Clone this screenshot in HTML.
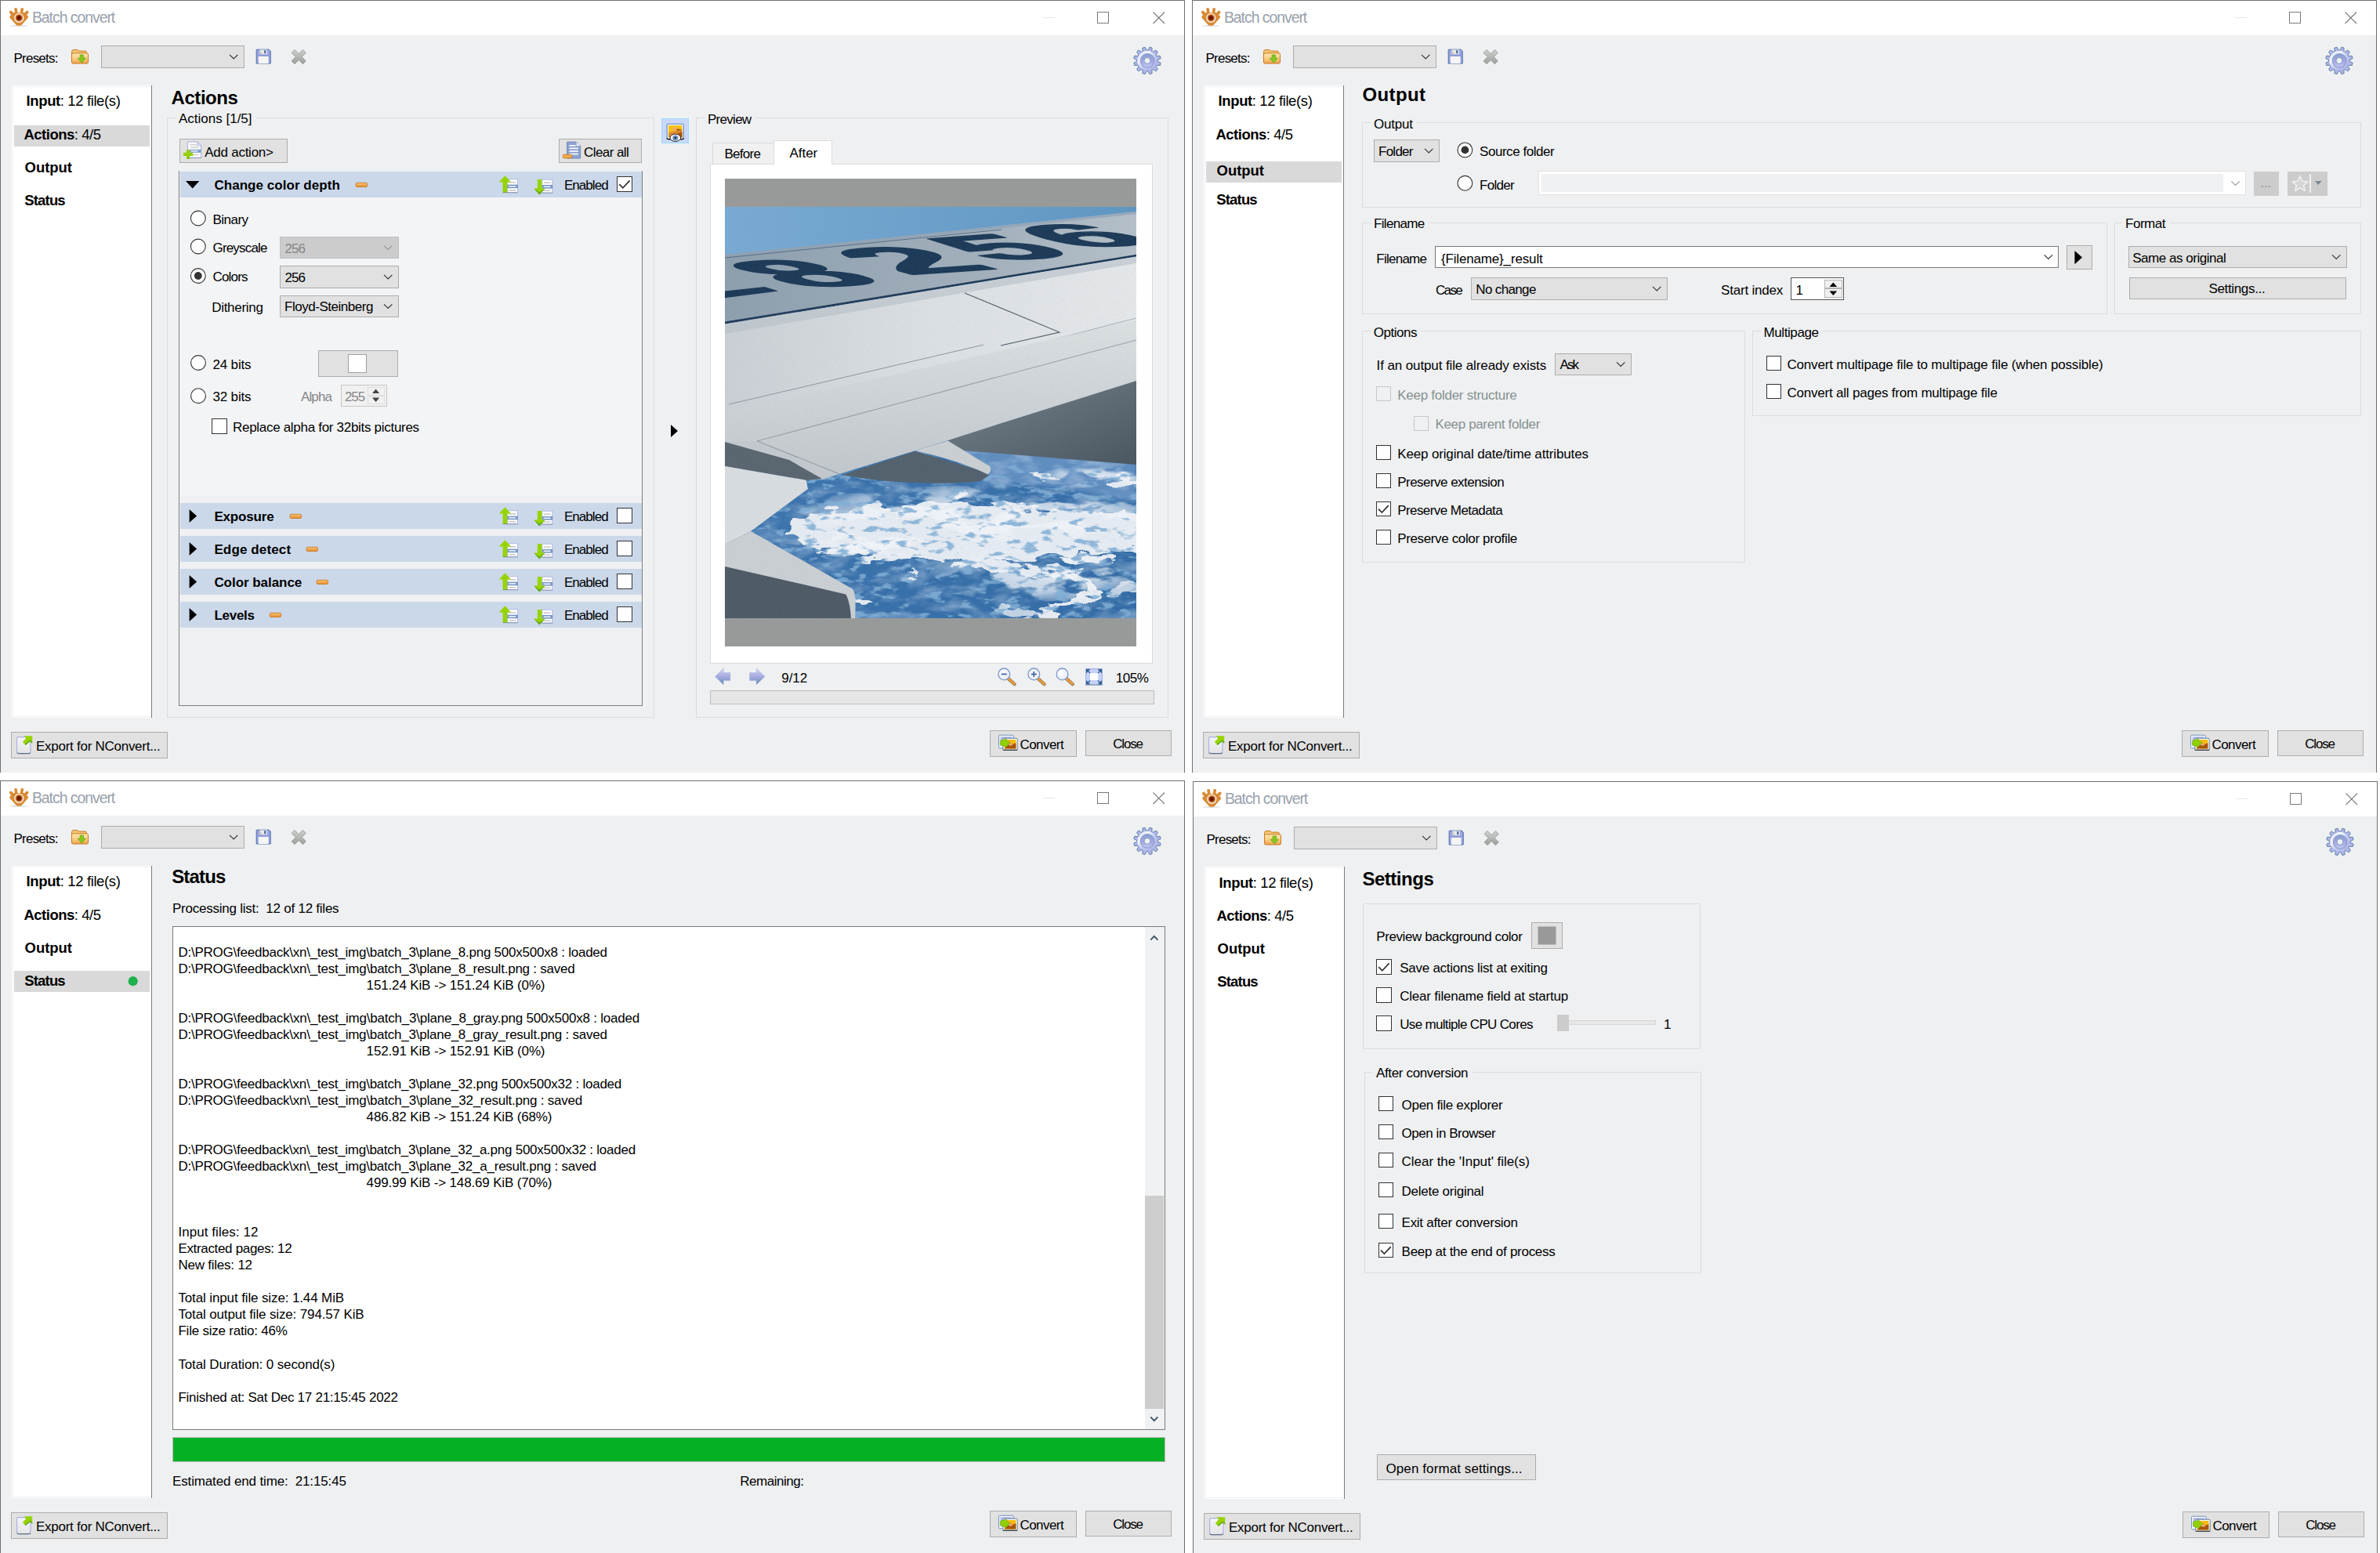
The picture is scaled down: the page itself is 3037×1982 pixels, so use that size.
<!DOCTYPE html>
<html><head><meta charset="utf-8"><title>Batch convert</title><style>html,body{margin:0;padding:0}
body{width:3037px;height:1982px;background:#fff;position:relative;overflow:hidden;font-family:"Liberation Sans",sans-serif;}
.win{position:absolute;overflow:hidden}
.win>div,.win>span,.win>svg{position:absolute}
.win>span{white-space:pre;line-height:1;color:#000}
svg{overflow:visible}</style></head><body>
<div class="win" style="left:0px;top:0px;width:1512px;height:986px"><div style="left:0px;top:0px;width:1512px;height:986px;background:#eff0f2;"></div>
<div style="left:0px;top:0px;width:1512px;height:45px;background:#fff;"></div>
<div style="left:0px;top:0px;width:1512px;height:1px;background:#6f6f6f;"></div>
<div style="left:0px;top:0px;width:1px;height:986px;background:#6f6f6f;"></div>
<div style="left:1511px;top:0px;width:1px;height:986px;background:#6f6f6f;"></div>
<svg style="left:12px;top:10px;" width="26" height="25" viewBox="0 0 26 25"><ellipse cx="12" cy="22.9" rx="11.5" ry="1.3" fill="#000" opacity=".10"/>
<g fill="#d88b36"><rect x="6.6" y="0" width="3.7" height="8" rx="1.7" transform="rotate(-9 8.4 4)"/>
<rect x="14" y="0" width="3.7" height="8" rx="1.7" transform="rotate(9 15.8 4)"/>
<rect x="1.2" y="3.2" width="3.9" height="7.5" rx="1.8" transform="rotate(-42 3.1 7)"/>
<rect x="19.3" y="3.2" width="3.9" height="7.5" rx="1.8" transform="rotate(42 21.3 7)"/>
<path d="M.3 12.6 Q-.2 11.6 .8 10.6 L5 6 H19.4 L23.6 10.6 Q24.6 11.6 24 12.6 L16 21.6 Q15 22.8 13.6 22.8 H10.8 Q9.4 22.8 8.4 21.6 Z"/></g>
<circle cx="12.3" cy="12.8" r="5.5" fill="none" stroke="#f4f3ee" stroke-width="1.3"/>
<circle cx="12.3" cy="12.8" r="3.5" fill="#8a2a05"/><circle cx="12.3" cy="12.7" r="1.9" fill="#611400"/></svg>
<span style="left:40.90px;top:13.25px;font-size:19.5px;color:#98a1ac;letter-spacing:-1.070px;">Batch convert</span>
<div style="left:1331px;top:22px;width:15px;height:1px;background:#e6e6e6;"></div>
<div style="left:1400px;top:15px;width:15px;height:15px;border:1px solid #7a7a7a;box-sizing:border-box;"></div>
<svg style="left:1471px;top:15px;" width="17" height="17" viewBox="0 0 17 17"><path d="M.5 .5 L15 15 M15 .5 L.5 15" stroke="#7a7a7a" stroke-width="1.1" fill="none"/></svg>
<span style="left:17.50px;top:66.00px;font-size:17px;letter-spacing:-0.770px;">Presets:</span>
<svg style="left:90px;top:62px;" width="24" height="21" viewBox="0 0 24 21"><g transform="translate(0.50 0.50)"><defs><linearGradient id="fg" x1="0" y1="0" x2="0" y2="1"><stop offset="0" stop-color="#fde6ae"/><stop offset=".5" stop-color="#f9cf85"/><stop offset="1" stop-color="#efa24a"/></linearGradient></defs>
<path d="M1 4 Q1 1 3.5 1 H7.5 Q9 1 10 2.6 H18.5 Q19.8 2.6 19.8 4 V8 H1 Z" fill="#f6c676" stroke="#c9781f" stroke-width="1"/>
<rect x="1" y="5.3" width="21" height="13.2" rx="1.8" fill="url(#fg)" stroke="#c9781f" stroke-width="1"/>
<path d="M11.6 7.5 H16 V11.8 H19 L13.8 17.6 L8.6 11.8 H11.6 Z" fill="#84c81c" stroke="#5a9c14" stroke-width=".6"/></g></svg>
<div style="left:129px;top:58px;width:183px;height:29px;background:#e1e1e1;border:1px solid #adadad;box-sizing:border-box;"></div>
<svg style="left:292px;top:68px;" width="13" height="9" viewBox="0 0 13 9"><g transform="translate(0.40 0.80)"><path d="M0.6 1 L5.8 6.2 L11 1" fill="none" stroke="#333" stroke-width="1.15"/></g></svg>
<svg style="left:326px;top:62px;" width="21" height="21" viewBox="0 0 21 21"><g transform="translate(0.60 0.60)"><path d="M1.2 .6 H16.6 L18.6 2.6 V18.4 H.6 V1.2 Q.6 .6 1.2 .6Z" fill="#9ea2e3" stroke="#456fa6" stroke-width="1"/>
<rect x="4.6" y=".8" width="9.8" height="5.8" fill="#e9e9e9"/><rect x="10.6" y="1.6" width="2.2" height="4" fill="#3e6698"/>
<path d="M4.6 .8 L8.5 6.6 H4.6Z" fill="#c9c9c9"/>
<rect x="3.2" y="9.4" width="12.8" height="9" fill="#f5f5f5"/><rect x="1" y="7.6" width="17" height="1.2" fill="#7f9ad0" opacity=".8"/></g></svg>
<svg style="left:371px;top:63px;" width="21" height="21" viewBox="0 0 21 21"><g transform="translate(0.60 0.00)"><defs><linearGradient id="gx" x1="0" y1="0" x2="0" y2="1"><stop offset="0" stop-color="#cfd1cf"/><stop offset="1" stop-color="#9b9e9b"/></linearGradient></defs>
<path d="M4.4 .5 L9.6 5.7 L14.8 .5 L18.7 4.4 L13.5 9.6 L18.7 14.8 L14.8 18.7 L9.6 13.5 L4.4 18.7 L.5 14.8 L5.7 9.6 L.5 4.4 Z" fill="url(#gx)" stroke="#8d908d" stroke-width=".8"/></g></svg>
<svg style="left:1446px;top:59px;" width="37" height="37" viewBox="0 0 37 37"><g transform="translate(0.00 0.40)"><defs><linearGradient id="gg" x1="0" y1="0" x2="1" y2="1"><stop offset="0" stop-color="#c9d2f6"/><stop offset=".3" stop-color="#f4f6fd"/><stop offset=".55" stop-color="#bfc8f2"/><stop offset="1" stop-color="#a9ace2"/></linearGradient>
<linearGradient id="gg2" x1="0" y1="0" x2="0" y2="1"><stop offset="0" stop-color="#869fd0"/><stop offset=".6" stop-color="#aaa9e2"/><stop offset="1" stop-color="#c3ccf4"/></linearGradient></defs>
<path d="M18.76 4.82 L20.90 0.84 L24.07 1.69 L23.93 6.21 L25.25 6.97 L29.09 4.59 L31.41 6.91 L29.03 10.75 L29.79 12.07 L34.31 11.93 L35.16 15.10 L31.18 17.24 L31.18 18.76 L35.16 20.90 L34.31 24.07 L29.79 23.93 L29.03 25.25 L31.41 29.09 L29.09 31.41 L25.25 29.03 L23.93 29.79 L24.07 34.31 L20.90 35.16 L18.76 31.18 L17.24 31.18 L15.10 35.16 L11.93 34.31 L12.07 29.79 L10.75 29.03 L6.91 31.41 L4.59 29.09 L6.97 25.25 L6.21 23.93 L1.69 24.07 L0.84 20.90 L4.82 18.76 L4.82 17.24 L0.84 15.10 L1.69 11.93 L6.21 12.07 L6.97 10.75 L4.59 6.91 L6.91 4.59 L10.75 6.97 L12.07 6.21 L11.93 1.69 L15.10 0.84 L17.24 4.82Z" fill="#b1b4e6" stroke="#5c83aa" stroke-width="1" stroke-linejoin="round"/>
<circle cx="18" cy="18" r="12.6" fill="url(#gg)"/>
<circle cx="18" cy="18" r="8.8" fill="url(#gg2)" stroke="#6f8fbd" stroke-width=".8"/>
<circle cx="18" cy="18" r="3.9" fill="#eef0f2" stroke="#6f8fbd" stroke-width=".8"/></g></svg>
<div style="left:15px;top:109px;width:179px;height:807px;background:#fff;"></div>
<div style="left:16px;top:110px;width:177px;height:1px;background:#eff0f2;"></div>
<div style="left:16px;top:110px;width:1px;height:805px;background:#eff0f2;"></div>
<div style="left:16px;top:914px;width:177px;height:1px;background:#eff0f2;"></div>
<div style="left:193px;top:109px;width:1px;height:807px;background:#7b7d80;"></div>
<span style="left:33.60px;top:120.25px;font-size:18.5px;font-weight:bold;letter-spacing:-0.388px">Input<span style="position:static;font-weight:normal">: 12 file(s)</span></span>
<div style="left:18px;top:160px;width:173px;height:27px;background:#d9d9d9;"></div>
<span style="left:30.40px;top:163.25px;font-size:18.5px;font-weight:bold;letter-spacing:-0.483px">Actions<span style="position:static;font-weight:normal">: 4/5</span></span>
<span style="left:31.60px;top:205.25px;font-size:18.5px;font-weight:bold;letter-spacing:-0.056px">Output</span>
<span style="left:31.30px;top:247.25px;font-size:18.5px;font-weight:bold;letter-spacing:-0.842px">Status</span>
<span style="left:218.50px;top:112.50px;font-size:24px;font-weight:bold;letter-spacing:-0.430px;">Actions</span>
<div style="left:14px;top:934px;width:200px;height:34px;background:#e1e1e1;border:1px solid #adadad;box-sizing:border-box;"></div>
<svg style="left:21px;top:939px;" width="22" height="25" viewBox="0 0 22 25"><defs><linearGradient id="ep" x1="0" y1="0" x2="0" y2="1"><stop offset="0" stop-color="#f4f4f6"/><stop offset="1" stop-color="#e4e4e6"/></linearGradient></defs>
<rect x=".6" y="1.6" width="17.4" height="21" rx="1.6" fill="url(#ep)" stroke="#a9afe4" stroke-width="1.1"/>
<path d="M1.2 21.2 Q1.2 22.6 2.6 22.6 H16 Q17.6 22.6 17.6 21.2" fill="none" stroke="#5d7186" stroke-width="1.1"/>
<path d="M10 .2 H20.2 V9.4 L17 7.6 L11.6 12 L7.8 7.8 L12.2 3.6Z" fill="#97d200"/>
<path d="M20.2 9.4 L17 7.6 L11.6 12 L10.6 10.8 L17 6 L20.2 7.6Z" fill="#4f9a2a" opacity=".8"/></svg>
<span style="left:46.00px;top:944.00px;font-size:17px;letter-spacing:-0.266px;">Export for NConvert...</span>
<div style="left:1263px;top:932px;width:111px;height:34px;background:#e1e1e1;border:1px solid #adadad;box-sizing:border-box;"></div>
<svg style="left:1274px;top:937px;" width="26" height="22" viewBox="0 0 26 22"><g transform="translate(0.00 0.60)"><rect x=".6" y=".6" width="18.6" height="16.6" rx="1.2" fill="#fff" stroke="#6a8bb8" stroke-width="1"/>
<rect x="2.4" y="2.4" width="15" height="12" fill="#b9bef0"/>
<rect x="5.8" y="4.6" width="18.4" height="15.2" rx="1.2" fill="#fff" stroke="#5f7f9f" stroke-width="1"/>
<rect x="7.6" y="6.4" width="14.8" height="11.6" fill="#f5ba0c"/>
<path d="M7.6 18 L15 9.5 L18 12.2 L22.4 10.6 V18Z" fill="#a8540e"/><path d="M12 13 L15 9.5 L18 12.2 L20 11.5 L16 14.5Z" fill="#eaa968"/>
<path d="M5.8 19.6 H24.2" stroke="#333" stroke-width="1.2"/>
<path d="M2.4 9.4 Q2.4 6.4 5.4 6.4 H8.8 V4.4 L14.4 10.6 L8.8 16.8 V14.6 H6 Q2.4 14.6 2.4 11.2Z" fill="#8fd000" stroke="#5a9c14" stroke-width=".5"/></g></svg>
<span style="left:1301.50px;top:942.00px;font-size:17px;letter-spacing:-0.567px;">Convert</span>
<div style="left:1385px;top:932px;width:110px;height:33px;background:#e1e1e1;border:1px solid #adadad;box-sizing:border-box;"></div>
<span style="left:1420.20px;top:941.00px;font-size:17px;letter-spacing:-1.180px;">Close</span>
<div style="left:213px;top:150px;width:622px;height:766px;border:1px solid #dcdcdc;box-sizing:border-box;"></div>
<div style="left:224px;top:148px;width:102.5px;height:5px;background:#eff0f2;"></div>
<span style="left:228.00px;top:143.00px;font-size:17px;letter-spacing:0.000px;">Actions [1/5]</span>
<div style="left:229px;top:177px;width:138px;height:31px;background:#e1e1e1;border:1px solid #adadad;box-sizing:border-box;"></div>
<svg style="left:234px;top:180px;" width="25" height="25" viewBox="0 0 25 25"><g transform="translate(0.00 0.40)"><path d="M5.6 .6 H17.6 L22.6 5.6 V21 H5.6Z" fill="#fff" stroke="#a3a9e2" stroke-width="1"/>
<path d="M17.6 .6 V5.6 H22.6Z" fill="#dfe3f7" stroke="#a3a9e2" stroke-width=".7"/>
<rect x="8.5" y="3.6" width="8" height="1.6" fill="#cfd2d2"/><rect x="8.5" y="7" width="11" height="1.6" fill="#cfd2d2"/>
<rect x="6" y="10.4" width="16.4" height="4" fill="#7f9bcb"/><rect x="9.5" y="11.7" width="9" height="1.3" fill="#fff"/>
<rect x="8.5" y="16.4" width="11" height="1.6" fill="#cfd2d2"/>
<path d="M4 10.6 H8.2 V14.4 H12.2 V18.6 H8.2 V22.6 H4 V18.6 H0 V14.4 H4Z" fill="#97d000"/>
<rect x="5.6" y="20.6" width="17" height="1" fill="#6b7f96" opacity=".6"/></g></svg>
<span style="left:261.20px;top:186.00px;font-size:17px;letter-spacing:-0.247px;">Add action&gt;</span>
<div style="left:713px;top:177px;width:106px;height:31px;background:#e1e1e1;border:1px solid #adadad;box-sizing:border-box;"></div>
<svg style="left:718px;top:180px;" width="25" height="24" viewBox="0 0 25 24"><g transform="translate(0.00 0.60)"><path d="M5.6 .6 H17.6 L22.6 5.6 V21.4 H5.6Z" fill="#8da2cf" stroke="#6f86b8" stroke-width="1"/>
<path d="M17.6 .6 V5.6 H22.6Z" fill="#e8ecf8"/>
<rect x="8.5" y="4.4" width="8" height="1.6" fill="#fff"/><rect x="8.5" y="8" width="11.4" height="1.6" fill="#fff"/>
<rect x="8.5" y="11.6" width="11.4" height="1.6" fill="#fff"/><rect x="8.5" y="15.2" width="11.4" height="1.6" fill="#fff"/>
<rect x=".5" y="16.6" width="11" height="4.6" rx="1.2" fill="#f3a94a" stroke="#c97a22" stroke-width=".9"/></g></svg>
<span style="left:745.00px;top:186.00px;font-size:17px;letter-spacing:-0.561px;">Clear all</span>
<div style="left:228px;top:218px;width:592px;height:683px;background:#eff0f2;"></div>
<div style="left:228px;top:218px;width:1px;height:683px;background:#7b7d80;"></div>
<div style="left:819px;top:218px;width:1px;height:683px;background:#7b7d80;"></div>
<div style="left:228px;top:900px;width:592px;height:1px;background:#7b7d80;"></div>
<div style="left:229px;top:219px;width:590px;height:414px;background:#f3f4f6;"></div>
<div style="left:230px;top:219px;width:589px;height:33px;background:#cbd8ea;"></div>
<svg style="left:237px;top:231px;" width="19" height="11" viewBox="0 0 19 11"><path d="M0 0 H17.4 L8.7 9.6Z" fill="#000"/></svg>
<span style="left:273.40px;top:228.00px;font-size:17px;font-weight:bold;letter-spacing:0.045px;">Change color depth</span>
<svg style="left:453px;top:232px;" width="17" height="8" viewBox="0 0 17 8"><g transform="translate(0.60 0.80)"><defs><linearGradient id="om" x1="0" y1="0" x2="0" y2="1"><stop offset="0" stop-color="#f9c67a"/><stop offset="1" stop-color="#e38d2c"/></linearGradient></defs>
<rect x=".5" y=".5" width="14.4" height="5.2" rx="1.6" fill="url(#om)" stroke="#c97a22" stroke-width=".9"/></g></svg>
<svg style="left:636px;top:224px;" width="26" height="24" viewBox="0 0 26 24"><g transform="translate(0.60 0.00)"><rect x="10.8" y="4.8" width="13" height="17" fill="#fff" stroke="#a9aee6" stroke-width=".8"/>
<rect x="10.8" y="11.6" width="13.4" height="4.6" fill="#7394c6"/>
<rect x="12.6" y="8" width="9" height="1.6" fill="#c9c9c9"/><rect x="12.6" y="13.2" width="9" height="1.4" fill="#fff"/><rect x="12.6" y="18" width="9" height="1.6" fill="#c9c9c9"/>
<path d="M7.8 .2 L15.5 8.6 H10.6 V22 H5 V8.6 H.1 Z" fill="#96d400"/>
<rect x="5" y="21.2" width="19" height="1" fill="#6b7f96" opacity=".7"/></g></svg>
<svg style="left:681px;top:228px;" width="26" height="22" viewBox="0 0 26 22"><g transform="translate(0.00 0.40)"><rect x="10.8" y=".8" width="13" height="17" fill="#fff" stroke="#a9aee6" stroke-width=".8"/>
<rect x="10.8" y="7.6" width="13.4" height="4.6" fill="#7394c6"/>
<rect x="12.6" y="4" width="9" height="1.6" fill="#c9c9c9"/><rect x="12.6" y="9.2" width="9" height="1.4" fill="#fff"/><rect x="12.6" y="14" width="9" height="1.6" fill="#c9c9c9"/>
<path d="M4.8 .6 H10.4 V12 H14.6 L7.4 20 L.2 12 H4.8 Z" fill="#96d400"/>
<path d="M.2 12 L7.4 20 L14.6 12 L7.4 17.2Z" fill="#4f9a2a" opacity=".75"/>
<rect x="10.4" y="17.2" width="14" height="1" fill="#6b7f96" opacity=".7"/></g></svg>
<span style="left:720.00px;top:228.00px;font-size:17px;letter-spacing:-0.965px;">Enabled</span>
<div style="left:787px;top:225px;width:20px;height:20px;background:#fff;border:1px solid #333;box-sizing:border-box;"></div>
<svg style="left:787px;top:225px;" width="21" height="21" viewBox="0 0 21 21"><path d="M3.2 10.2 L7.8 14.8 L16.6 5.4" fill="none" stroke="#333" stroke-width="1.7"/></svg>
<div style="left:230px;top:642px;width:589px;height:33px;background:#cbd8ea;"></div>
<svg style="left:241px;top:649px;" width="12" height="18" viewBox="0 0 12 18"><g transform="translate(0.60 0.90)"><path d="M0 0 L9.5 8.5 L0 17Z" fill="#000"/></g></svg>
<span style="left:273.40px;top:651.00px;font-size:17px;font-weight:bold;letter-spacing:-0.160px;">Exposure</span>
<svg style="left:369px;top:655px;" width="17" height="8" viewBox="0 0 17 8"><g transform="translate(0.60 0.80)"><defs><linearGradient id="om" x1="0" y1="0" x2="0" y2="1"><stop offset="0" stop-color="#f9c67a"/><stop offset="1" stop-color="#e38d2c"/></linearGradient></defs>
<rect x=".5" y=".5" width="14.4" height="5.2" rx="1.6" fill="url(#om)" stroke="#c97a22" stroke-width=".9"/></g></svg>
<svg style="left:636px;top:647px;" width="26" height="24" viewBox="0 0 26 24"><g transform="translate(0.60 0.00)"><rect x="10.8" y="4.8" width="13" height="17" fill="#fff" stroke="#a9aee6" stroke-width=".8"/>
<rect x="10.8" y="11.6" width="13.4" height="4.6" fill="#7394c6"/>
<rect x="12.6" y="8" width="9" height="1.6" fill="#c9c9c9"/><rect x="12.6" y="13.2" width="9" height="1.4" fill="#fff"/><rect x="12.6" y="18" width="9" height="1.6" fill="#c9c9c9"/>
<path d="M7.8 .2 L15.5 8.6 H10.6 V22 H5 V8.6 H.1 Z" fill="#96d400"/>
<rect x="5" y="21.2" width="19" height="1" fill="#6b7f96" opacity=".7"/></g></svg>
<svg style="left:681px;top:651px;" width="26" height="22" viewBox="0 0 26 22"><g transform="translate(0.00 0.40)"><rect x="10.8" y=".8" width="13" height="17" fill="#fff" stroke="#a9aee6" stroke-width=".8"/>
<rect x="10.8" y="7.6" width="13.4" height="4.6" fill="#7394c6"/>
<rect x="12.6" y="4" width="9" height="1.6" fill="#c9c9c9"/><rect x="12.6" y="9.2" width="9" height="1.4" fill="#fff"/><rect x="12.6" y="14" width="9" height="1.6" fill="#c9c9c9"/>
<path d="M4.8 .6 H10.4 V12 H14.6 L7.4 20 L.2 12 H4.8 Z" fill="#96d400"/>
<path d="M.2 12 L7.4 20 L14.6 12 L7.4 17.2Z" fill="#4f9a2a" opacity=".75"/>
<rect x="10.4" y="17.2" width="14" height="1" fill="#6b7f96" opacity=".7"/></g></svg>
<span style="left:720.00px;top:651.00px;font-size:17px;letter-spacing:-0.965px;">Enabled</span>
<div style="left:787px;top:648px;width:20px;height:20px;background:#fff;border:1px solid #333;box-sizing:border-box;"></div>
<div style="left:230px;top:684px;width:589px;height:33px;background:#cbd8ea;"></div>
<svg style="left:241px;top:691px;" width="12" height="18" viewBox="0 0 12 18"><g transform="translate(0.60 0.90)"><path d="M0 0 L9.5 8.5 L0 17Z" fill="#000"/></g></svg>
<span style="left:273.40px;top:693.00px;font-size:17px;font-weight:bold;letter-spacing:0.131px;">Edge detect</span>
<svg style="left:390px;top:697px;" width="17" height="8" viewBox="0 0 17 8"><g transform="translate(0.60 0.80)"><defs><linearGradient id="om" x1="0" y1="0" x2="0" y2="1"><stop offset="0" stop-color="#f9c67a"/><stop offset="1" stop-color="#e38d2c"/></linearGradient></defs>
<rect x=".5" y=".5" width="14.4" height="5.2" rx="1.6" fill="url(#om)" stroke="#c97a22" stroke-width=".9"/></g></svg>
<svg style="left:636px;top:689px;" width="26" height="24" viewBox="0 0 26 24"><g transform="translate(0.60 0.00)"><rect x="10.8" y="4.8" width="13" height="17" fill="#fff" stroke="#a9aee6" stroke-width=".8"/>
<rect x="10.8" y="11.6" width="13.4" height="4.6" fill="#7394c6"/>
<rect x="12.6" y="8" width="9" height="1.6" fill="#c9c9c9"/><rect x="12.6" y="13.2" width="9" height="1.4" fill="#fff"/><rect x="12.6" y="18" width="9" height="1.6" fill="#c9c9c9"/>
<path d="M7.8 .2 L15.5 8.6 H10.6 V22 H5 V8.6 H.1 Z" fill="#96d400"/>
<rect x="5" y="21.2" width="19" height="1" fill="#6b7f96" opacity=".7"/></g></svg>
<svg style="left:681px;top:693px;" width="26" height="22" viewBox="0 0 26 22"><g transform="translate(0.00 0.40)"><rect x="10.8" y=".8" width="13" height="17" fill="#fff" stroke="#a9aee6" stroke-width=".8"/>
<rect x="10.8" y="7.6" width="13.4" height="4.6" fill="#7394c6"/>
<rect x="12.6" y="4" width="9" height="1.6" fill="#c9c9c9"/><rect x="12.6" y="9.2" width="9" height="1.4" fill="#fff"/><rect x="12.6" y="14" width="9" height="1.6" fill="#c9c9c9"/>
<path d="M4.8 .6 H10.4 V12 H14.6 L7.4 20 L.2 12 H4.8 Z" fill="#96d400"/>
<path d="M.2 12 L7.4 20 L14.6 12 L7.4 17.2Z" fill="#4f9a2a" opacity=".75"/>
<rect x="10.4" y="17.2" width="14" height="1" fill="#6b7f96" opacity=".7"/></g></svg>
<span style="left:720.00px;top:693.00px;font-size:17px;letter-spacing:-0.965px;">Enabled</span>
<div style="left:787px;top:690px;width:20px;height:20px;background:#fff;border:1px solid #333;box-sizing:border-box;"></div>
<div style="left:230px;top:726px;width:589px;height:33px;background:#cbd8ea;"></div>
<svg style="left:241px;top:733px;" width="12" height="18" viewBox="0 0 12 18"><g transform="translate(0.60 0.90)"><path d="M0 0 L9.5 8.5 L0 17Z" fill="#000"/></g></svg>
<span style="left:273.40px;top:735.00px;font-size:17px;font-weight:bold;letter-spacing:-0.047px;">Color balance</span>
<svg style="left:403px;top:739px;" width="17" height="8" viewBox="0 0 17 8"><g transform="translate(0.60 0.80)"><defs><linearGradient id="om" x1="0" y1="0" x2="0" y2="1"><stop offset="0" stop-color="#f9c67a"/><stop offset="1" stop-color="#e38d2c"/></linearGradient></defs>
<rect x=".5" y=".5" width="14.4" height="5.2" rx="1.6" fill="url(#om)" stroke="#c97a22" stroke-width=".9"/></g></svg>
<svg style="left:636px;top:731px;" width="26" height="24" viewBox="0 0 26 24"><g transform="translate(0.60 0.00)"><rect x="10.8" y="4.8" width="13" height="17" fill="#fff" stroke="#a9aee6" stroke-width=".8"/>
<rect x="10.8" y="11.6" width="13.4" height="4.6" fill="#7394c6"/>
<rect x="12.6" y="8" width="9" height="1.6" fill="#c9c9c9"/><rect x="12.6" y="13.2" width="9" height="1.4" fill="#fff"/><rect x="12.6" y="18" width="9" height="1.6" fill="#c9c9c9"/>
<path d="M7.8 .2 L15.5 8.6 H10.6 V22 H5 V8.6 H.1 Z" fill="#96d400"/>
<rect x="5" y="21.2" width="19" height="1" fill="#6b7f96" opacity=".7"/></g></svg>
<svg style="left:681px;top:735px;" width="26" height="22" viewBox="0 0 26 22"><g transform="translate(0.00 0.40)"><rect x="10.8" y=".8" width="13" height="17" fill="#fff" stroke="#a9aee6" stroke-width=".8"/>
<rect x="10.8" y="7.6" width="13.4" height="4.6" fill="#7394c6"/>
<rect x="12.6" y="4" width="9" height="1.6" fill="#c9c9c9"/><rect x="12.6" y="9.2" width="9" height="1.4" fill="#fff"/><rect x="12.6" y="14" width="9" height="1.6" fill="#c9c9c9"/>
<path d="M4.8 .6 H10.4 V12 H14.6 L7.4 20 L.2 12 H4.8 Z" fill="#96d400"/>
<path d="M.2 12 L7.4 20 L14.6 12 L7.4 17.2Z" fill="#4f9a2a" opacity=".75"/>
<rect x="10.4" y="17.2" width="14" height="1" fill="#6b7f96" opacity=".7"/></g></svg>
<span style="left:720.00px;top:735.00px;font-size:17px;letter-spacing:-0.965px;">Enabled</span>
<div style="left:787px;top:732px;width:20px;height:20px;background:#fff;border:1px solid #333;box-sizing:border-box;"></div>
<div style="left:230px;top:768px;width:589px;height:33px;background:#cbd8ea;"></div>
<svg style="left:241px;top:775px;" width="12" height="18" viewBox="0 0 12 18"><g transform="translate(0.60 0.90)"><path d="M0 0 L9.5 8.5 L0 17Z" fill="#000"/></g></svg>
<span style="left:273.40px;top:777.00px;font-size:17px;font-weight:bold;letter-spacing:-0.254px;">Levels</span>
<svg style="left:343px;top:781px;" width="17" height="8" viewBox="0 0 17 8"><g transform="translate(0.80 0.80)"><defs><linearGradient id="om" x1="0" y1="0" x2="0" y2="1"><stop offset="0" stop-color="#f9c67a"/><stop offset="1" stop-color="#e38d2c"/></linearGradient></defs>
<rect x=".5" y=".5" width="14.4" height="5.2" rx="1.6" fill="url(#om)" stroke="#c97a22" stroke-width=".9"/></g></svg>
<svg style="left:636px;top:773px;" width="26" height="24" viewBox="0 0 26 24"><g transform="translate(0.60 0.00)"><rect x="10.8" y="4.8" width="13" height="17" fill="#fff" stroke="#a9aee6" stroke-width=".8"/>
<rect x="10.8" y="11.6" width="13.4" height="4.6" fill="#7394c6"/>
<rect x="12.6" y="8" width="9" height="1.6" fill="#c9c9c9"/><rect x="12.6" y="13.2" width="9" height="1.4" fill="#fff"/><rect x="12.6" y="18" width="9" height="1.6" fill="#c9c9c9"/>
<path d="M7.8 .2 L15.5 8.6 H10.6 V22 H5 V8.6 H.1 Z" fill="#96d400"/>
<rect x="5" y="21.2" width="19" height="1" fill="#6b7f96" opacity=".7"/></g></svg>
<svg style="left:681px;top:777px;" width="26" height="22" viewBox="0 0 26 22"><g transform="translate(0.00 0.40)"><rect x="10.8" y=".8" width="13" height="17" fill="#fff" stroke="#a9aee6" stroke-width=".8"/>
<rect x="10.8" y="7.6" width="13.4" height="4.6" fill="#7394c6"/>
<rect x="12.6" y="4" width="9" height="1.6" fill="#c9c9c9"/><rect x="12.6" y="9.2" width="9" height="1.4" fill="#fff"/><rect x="12.6" y="14" width="9" height="1.6" fill="#c9c9c9"/>
<path d="M4.8 .6 H10.4 V12 H14.6 L7.4 20 L.2 12 H4.8 Z" fill="#96d400"/>
<path d="M.2 12 L7.4 20 L14.6 12 L7.4 17.2Z" fill="#4f9a2a" opacity=".75"/>
<rect x="10.4" y="17.2" width="14" height="1" fill="#6b7f96" opacity=".7"/></g></svg>
<span style="left:720.00px;top:777.00px;font-size:17px;letter-spacing:-0.965px;">Enabled</span>
<div style="left:787px;top:774px;width:20px;height:20px;background:#fff;border:1px solid #333;box-sizing:border-box;"></div>
<svg style="left:241px;top:267px;" width="23" height="23" viewBox="0 0 23 23"><g transform="translate(0.80 0.50)"><circle cx="11" cy="11" r="9.4" fill="#fff" stroke="#333" stroke-width="1.1"/></g></svg>
<span style="left:271.50px;top:272.00px;font-size:17px;letter-spacing:-0.522px;">Binary</span>
<svg style="left:241px;top:303px;" width="23" height="23" viewBox="0 0 23 23"><g transform="translate(0.80 0.50)"><circle cx="11" cy="11" r="9.4" fill="#fff" stroke="#333" stroke-width="1.1"/></g></svg>
<span style="left:271.50px;top:308.00px;font-size:17px;letter-spacing:-0.825px;">Greyscale</span>
<div style="left:357px;top:302px;width:152px;height:28px;background:#cccccc;border:1px solid #bfbfbf;box-sizing:border-box;"></div>
<svg style="left:489px;top:312px;" width="13" height="9" viewBox="0 0 13 9"><g transform="translate(0.40 0.30)"><path d="M0.6 1 L5.8 6.2 L11 1" fill="none" stroke="#9a9a9a" stroke-width="1.15"/></g></svg>
<span style="left:363.60px;top:309.00px;font-size:17px;color:#858585;letter-spacing:-0.995px;">256</span>
<svg style="left:241px;top:341px;" width="23" height="23" viewBox="0 0 23 23"><g transform="translate(0.80 0.00)"><circle cx="11" cy="11" r="9.4" fill="#fff" stroke="#333" stroke-width="1.1"/><circle cx="11" cy="11" r="4.9" fill="#333"/></g></svg>
<span style="left:271.50px;top:345.00px;font-size:17px;letter-spacing:-0.826px;">Colors</span>
<div style="left:357px;top:339px;width:152px;height:29px;background:#e1e1e1;border:1px solid #adadad;box-sizing:border-box;"></div>
<svg style="left:489px;top:349px;" width="13" height="9" viewBox="0 0 13 9"><g transform="translate(0.40 0.80)"><path d="M0.6 1 L5.8 6.2 L11 1" fill="none" stroke="#333" stroke-width="1.15"/></g></svg>
<span style="left:363.60px;top:346.00px;font-size:17px;letter-spacing:-0.995px;">256</span>
<span style="left:270.20px;top:384.00px;font-size:17px;letter-spacing:-0.288px;">Dithering</span>
<div style="left:357px;top:377px;width:152px;height:28px;background:#e1e1e1;border:1px solid #adadad;box-sizing:border-box;"></div>
<svg style="left:489px;top:387px;" width="13" height="9" viewBox="0 0 13 9"><g transform="translate(0.40 0.30)"><path d="M0.6 1 L5.8 6.2 L11 1" fill="none" stroke="#333" stroke-width="1.15"/></g></svg>
<span style="left:363.00px;top:383.00px;font-size:17px;letter-spacing:-0.466px;">Floyd-Steinberg</span>
<svg style="left:242px;top:452px;" width="23" height="23" viewBox="0 0 23 23"><circle cx="11" cy="11" r="9.4" fill="#fff" stroke="#333" stroke-width="1.1"/></svg>
<span style="left:271.50px;top:457.00px;font-size:17px;letter-spacing:-0.175px;">24 bits</span>
<div style="left:406px;top:447px;width:102px;height:34px;background:#e1e1e1;border:1px solid #adadad;box-sizing:border-box;"></div>
<div style="left:444px;top:452px;width:24px;height:24px;background:#fff;border:1px solid #a0a0a0;box-sizing:border-box;"></div>
<svg style="left:242px;top:494px;" width="23" height="23" viewBox="0 0 23 23"><g transform="translate(0.00 0.20)"><circle cx="11" cy="11" r="9.4" fill="#fff" stroke="#333" stroke-width="1.1"/></g></svg>
<span style="left:271.50px;top:498.00px;font-size:17px;letter-spacing:-0.175px;">32 bits</span>
<span style="left:384.00px;top:498.00px;font-size:17px;color:#858585;letter-spacing:-0.880px;">Alpha</span>
<div style="left:435px;top:491px;width:59px;height:28px;background:#f1f1f1;border:1px solid #c6c6c6;box-sizing:border-box;"></div>
<span style="left:440.00px;top:498.00px;font-size:17px;color:#858585;letter-spacing:-1.095px;">255</span>
<div style="left:469px;top:494px;width:22px;height:11px;border:1px solid #dedede;box-sizing:border-box;"></div>
<div style="left:469px;top:505px;width:22px;height:11px;border:1px solid #dedede;box-sizing:border-box;"></div>
<svg style="left:475px;top:496px;" width="11" height="8" viewBox="0 0 11 8"><path d="M0 6 L4.6 .6 L9.2 6Z" fill="#444"/></svg>
<svg style="left:475px;top:507px;" width="11" height="8" viewBox="0 0 11 8"><path d="M0 .6 L4.6 6 L9.2 .6Z" fill="#444"/></svg>
<div style="left:270px;top:534px;width:20px;height:20px;background:#fff;border:1px solid #333;box-sizing:border-box;"></div>
<span style="left:297.00px;top:537.00px;font-size:17px;letter-spacing:-0.298px;">Replace alpha for 32bits pictures</span>
<div style="left:844px;top:151px;width:35px;height:32px;background:#cad8fb;border:1px solid #9bdaff;box-sizing:border-box;"></div>
<svg style="left:850px;top:157px;" width="24" height="25" viewBox="0 0 24 25"><g transform="translate(0.60 0.60)"><rect x=".6" y=".6" width="21" height="19.4" rx="1.4" fill="#fff" stroke="#5d81a9" stroke-width="1.1"/>
<rect x="2.4" y="2.4" width="17.4" height="15.6" fill="#f5c012"/>
<circle cx="10.6" cy="7.4" r="2.8" fill="#eeab62"/>
<path d="M2.4 12 L7 10.4 L12 9.6 L14 7.2 L19.8 8.8 V18 H2.4Z" fill="#dc8b31"/>
<path d="M12.4 8.6 L14 6.6 L19 8 V9 L12.4 9Z" fill="#a5520a"/><path d="M14 13 L19.8 10.6 V18 H15Z" fill="#a5520a"/>
<path d="M.6 18.6 Q.6 20 2 20 H20.2 Q21.6 20 21.6 18.6" fill="none" stroke="#000" stroke-width="1.3"/>
<ellipse cx="11.2" cy="18.2" rx="6.8" ry="4.7" fill="#fff" stroke="#222" stroke-width="1"/>
<circle cx="11.2" cy="18.4" r="3.6" fill="#6e92c4"/><circle cx="11.2" cy="18.4" r="1.3" fill="#222"/></g></svg>
<svg style="left:856px;top:542px;" width="11" height="17" viewBox="0 0 11 17"><path d="M0 0 L9 8.0 L0 16Z" fill="#000"/></svg>
<div style="left:888px;top:150px;width:603px;height:766px;border:1px solid #dcdcdc;box-sizing:border-box;"></div>
<div style="left:899px;top:148px;width:65.20000000000005px;height:5px;background:#eff0f2;"></div>
<span style="left:903.00px;top:144.00px;font-size:17px;letter-spacing:-0.720px;">Preview</span>
<div style="left:906px;top:209px;width:565px;height:638px;background:#fff;border:1px solid #dcdcdc;box-sizing:border-box;"></div>
<div style="left:909px;top:182px;width:79px;height:28px;background:#f0f0f0;border:1px solid #d9d9d9;box-sizing:border-box;"></div>
<span style="left:924.40px;top:188.00px;font-size:17px;letter-spacing:-0.710px;">Before</span>
<div style="left:987px;top:179px;width:75px;height:31px;background:#fff;border:1px solid #dcdcdc;box-sizing:border-box;"></div>
<div style="left:988px;top:208px;width:73px;height:3px;background:#fff;"></div>
<span style="left:1007.60px;top:187.00px;font-size:17px;letter-spacing:-0.067px;">After</span>
<div style="left:925px;top:228px;width:525px;height:597px;background:#989a99;"></div>
<svg style="left:925px;top:264px;overflow:hidden" width="525" height="525" viewBox="0 0 525 525"><defs>
<linearGradient id="pgr" x1="0" y1="0" x2="1" y2="1"><stop offset="0" stop-color="#4a80b6"/><stop offset=".5" stop-color="#3a72ac"/><stop offset="1" stop-color="#2f69a4"/></linearGradient>
<linearGradient id="psky" x1="0" y1="0" x2="1" y2="0"><stop offset="0" stop-color="#79abd4"/><stop offset="1" stop-color="#5e97c3"/></linearGradient>
<linearGradient id="pband" x1="0" y1="0" x2="1" y2="0"><stop offset="0" stop-color="#8e9fad"/><stop offset=".6" stop-color="#a3b0bb"/><stop offset="1" stop-color="#b7c1c9"/></linearGradient>
<linearGradient id="pwing" x1="0" y1="0" x2="1" y2="0"><stop offset="0" stop-color="#ccd1d5"/><stop offset=".5" stop-color="#dfe2e4"/><stop offset="1" stop-color="#e8eaeb"/></linearGradient>
<linearGradient id="pflap" x1="0" y1="0" x2="0" y2="1"><stop offset="0" stop-color="#dfe2e3"/><stop offset="1" stop-color="#c4c9cc"/></linearGradient>
<linearGradient id="pshadow" x1="0" y1="0" x2="1" y2="1"><stop offset="0" stop-color="#76828a"/><stop offset="1" stop-color="#48545d"/></linearGradient>
<filter id="pn" x="0" y="0" width="100%" height="100%"><feTurbulence type="fractalNoise" baseFrequency=".9" numOctaves="2" seed="3"/><feColorMatrix values="0 0 0 0 .2  0 0 0 0 .3  0 0 0 0 .45  0 0 0 .55 -.18"/></filter>
<filter id="psnow" x="0" y="0" width="100%" height="100%"><feTurbulence type="fractalNoise" baseFrequency=".016 .045" numOctaves="4" seed="11"/><feColorMatrix values="0 0 0 0 .93  0 0 0 0 .95  0 0 0 0 .97  9 0 0 0 -4.45"/></filter>
<filter id="phaze" x="0" y="0" width="100%" height="100%"><feTurbulence type="fractalNoise" baseFrequency=".03 .06" numOctaves="3" seed="5"/><feColorMatrix values="0 0 0 0 .75  0 0 0 0 .83  0 0 0 0 .93  2.4 0 0 0 -1.05"/></filter>
<radialGradient id="pm1" cx=".55" cy=".5" r=".6"><stop offset="0" stop-color="#fff"/><stop offset=".5" stop-color="#fff" stop-opacity=".8"/><stop offset="1" stop-color="#fff" stop-opacity="0"/></radialGradient>
<mask id="pmk"><rect width="525" height="525" fill="#000"/><ellipse cx="320" cy="392" rx="250" ry="36" fill="url(#pm1)"/><ellipse cx="390" cy="470" rx="130" ry="34" fill="url(#pm1)"/><ellipse cx="180" cy="430" rx="110" ry="18" fill="url(#pm1)"/><ellipse cx="470" cy="345" rx="70" ry="14" fill="url(#pm1)"/></mask>
<filter id="pblur"><feGaussianBlur stdDeviation="2"/></filter>
<filter id="prough" x="-5%" y="-30%" width="110%" height="160%"><feTurbulence type="fractalNoise" baseFrequency=".03 .075" numOctaves="3" seed="8" result="n"/><feDisplacementMap in="SourceGraphic" in2="n" scale="30" xChannelSelector="R" yChannelSelector="G"/></filter>
<filter id="pspeck" x="0" y="0" width="100%" height="100%"><feTurbulence type="fractalNoise" baseFrequency=".05 .12" numOctaves="3" seed="21"/><feColorMatrix values="0 0 0 0 .22  0 0 0 0 .43  0 0 0 0 .67  7 0 0 0 -3.9"/></filter>
</defs>
<rect width="525" height="525" fill="url(#pgr)"/>
<path d="M300 300 H525 V378 Q430 352 300 350Z" fill="#7aa2d0" opacity=".6" filter="url(#pblur)"/>
<rect width="525" height="525" filter="url(#phaze)" opacity=".4"/>
<g filter="url(#prough)" fill="#e9eef4">
<path d="M84 402 Q140 376 220 382 Q300 372 380 386 Q460 388 540 394 V442 Q470 436 420 447 Q340 458 270 447 Q190 454 130 441 Q66 428 84 402Z"/>
<path d="M300 452 Q360 460 410 464 Q456 468 470 486 Q472 502 434 508 Q404 514 400 530" fill="none" stroke="#e9eef4" stroke-width="11"/>
<ellipse cx="232" cy="471" rx="13" ry="3.5"/><ellipse cx="176" cy="500" rx="9" ry="5"/><ellipse cx="462" cy="450" rx="34" ry="6"/>
<ellipse cx="505" cy="352" rx="26" ry="6"/><ellipse cx="298" cy="366" rx="9" ry="6"/><ellipse cx="410" cy="342" rx="16" ry="3"/>
<ellipse cx="505" cy="490" rx="22" ry="8" opacity=".8"/><ellipse cx="375" cy="518" rx="24" ry="8" opacity=".8"/>
</g>
<g mask="url(#pmk)"><rect width="525" height="525" filter="url(#psnow)" opacity=".9"/></g>
<rect y="330" width="525" height="195" filter="url(#pspeck)" opacity=".85"/>
<!-- sky -->
<path d="M0 0 H525 V7 L0 62Z" fill="url(#psky)"/>
<!-- registration band -->
<path d="M0 61 L525 6 V63 L0 149Z" fill="url(#pband)"/>
<path d="M0 61 L525 6 V9 L0 65Z" fill="#8fa3b6" opacity=".7"/>
<path d="M0 65 L353 29" stroke="#4a6078" stroke-width="1" opacity=".8"/>
<g fill="#1a3855"><g transform="matrix(2.75 -0.2 2.3 0.62 100 85)"><text x="0" y="24.7" text-anchor="middle" font-family="Liberation Sans, sans-serif" font-weight="bold" font-size="72" stroke="#1a3855" stroke-width="2.2" stroke-linejoin="round">8</text></g><g transform="matrix(3.0 -0.2 2.2 0.6 238 68)"><text x="0" y="24.7" text-anchor="middle" font-family="Liberation Sans, sans-serif" font-weight="bold" font-size="72" stroke="#1a3855" stroke-width="2.2" stroke-linejoin="round">2</text></g><g transform="matrix(2.7 -0.2 2.0 0.56 350 52)"><text x="0" y="24.7" text-anchor="middle" font-family="Liberation Sans, sans-serif" font-weight="bold" font-size="72" stroke="#1a3855" stroke-width="2.2" stroke-linejoin="round">5</text></g><g transform="matrix(2.7 -0.2 1.9 0.52 457 37)"><text x="0" y="24.7" text-anchor="middle" font-family="Liberation Sans, sans-serif" font-weight="bold" font-size="72" stroke="#1a3855" stroke-width="2.2" stroke-linejoin="round">6</text></g><path d="M0 107.4 L50.7 102 L68.4 107.4 L0 116.3Z"/></g>
<path d="M0 146.6 L525 60.8 V63.6 L0 149.6Z" fill="#1f3a56"/>
<!-- upper wing -->
<path d="M0 149.6 L525 63.6 V230 L0 330Z" fill="url(#pwing)"/>
<path d="M0 150 L525 64 V72 L0 162Z" fill="#b9c1c8" opacity=".6"/>
<path d="M306 110 L427 160 L352 177" fill="none" stroke="#4f5a64" stroke-width="1.1"/>
<path d="M0 278 L525 142" stroke="#aab0b5" stroke-width="1.2"/>
<path d="M5 252 L330 176" stroke="#8e969c" stroke-width="1"/>
<!-- shadow under wing (right) -->
<path d="M284.6 298 L353 276 L525 221 V329 L304 311Z" fill="url(#pshadow)"/>
<!-- flap -->
<path d="M0 262 L525 145 V222 L353 276 L284.6 298 L242.7 311.3 L145.6 341 L40.8 299 L0 306Z" fill="url(#pflap)"/>
<path d="M40.8 299 L525 170" stroke="#9aa1a7" stroke-width="1.1"/>
<path d="M40.8 299 L145.6 341" stroke="#6f777d" stroke-width="1.1"/>
<!-- flap track fairing -->
<path d="M150 342 L242.7 312 L331 337.8 L337.5 342.2 L326.5 350 Q290 354 242.7 352 Q190 350 150 342Z" fill="#51606b"/>
<path d="M242.7 311.3 L284.6 298.5 L338.5 331.5 Q341 337 335.5 341.5 Q300 324 242.7 311.3Z" fill="#cdd1d3"/>
<!-- left lower structures -->
<path d="M0 299 L40.8 299 L145.6 341 L124 348 L0 331Z" fill="#c5cace"/>
<path d="M0 300 L82 323 L124 347 L104 349 L0 331Z" fill="#59646d"/>
<path d="M0 331 L103.7 348.8 L106 360 L33 414 L0 430.4Z" fill="#dcdfe1"/>
<path d="M0 430.4 L33 413.9 L163.2 487.8 Q168 495 166 526 H0Z" fill="#cdd1d4"/>
<path d="M0 459 L154.4 494.4 Q160 505 161 526 H0Z" fill="#4d5963"/>
<rect width="525" height="525" filter="url(#pn)" opacity=".5"/>
</svg>
<svg style="left:912px;top:853px;" width="22" height="22" viewBox="0 0 22 22"><defs><linearGradient id="na" x1="0" y1="0" x2="0" y2="1"><stop offset="0" stop-color="#d3dbf7"/><stop offset=".3" stop-color="#b6bae8"/><stop offset=".55" stop-color="#a4a7dd"/><stop offset=".72" stop-color="#86a0d0"/><stop offset="1" stop-color="#5880b2"/></linearGradient></defs>
<path d="M.4 10.4 L11.2 .2 V5.6 H19.8 V15.4 H11.2 V20.8Z" fill="url(#na)" stroke="#9fb0d8" stroke-width=".5"/></svg>
<svg style="left:955px;top:853px;" width="22" height="22" viewBox="0 0 22 22"><g transform="translate(0.40 0.00)"><defs><linearGradient id="nb" x1="0" y1="0" x2="0" y2="1"><stop offset="0" stop-color="#d3dbf7"/><stop offset=".3" stop-color="#b6bae8"/><stop offset=".55" stop-color="#a4a7dd"/><stop offset=".72" stop-color="#86a0d0"/><stop offset="1" stop-color="#5880b2"/></linearGradient></defs>
<path d="M.4 10.4 L11.2 .2 V5.6 H19.8 V15.4 H11.2 V20.8Z" transform="translate(21 0) scale(-1 1)" fill="url(#nb)" stroke="#9fb0d8" stroke-width=".5"/></g></svg>
<span style="left:997.20px;top:857.00px;font-size:17px;letter-spacing:-0.017px;">9/12</span>
<svg style="left:1273px;top:852px;" width="25" height="25" viewBox="0 0 25 25"><defs><radialGradient id="zg" cx=".4" cy=".4" r=".7"><stop offset="0" stop-color="#fff"/><stop offset="1" stop-color="#dfe6f5"/></radialGradient></defs>
<path d="M13.2 13.6 L21.6 21.2" stroke="#8a7048" stroke-width="4.2" stroke-linecap="round"/>
<path d="M13.4 13.8 L21.4 21" stroke="#ee9c3e" stroke-width="2.6" stroke-linecap="round"/>
<circle cx="8.3" cy="8.4" r="7.4" fill="url(#zg)" stroke="#8098c8" stroke-width="1.3"/><path d="M4.8 8.4 H11.8" stroke="#3a5ea8" stroke-width="1.7"/></svg>
<svg style="left:1311px;top:852px;" width="25" height="25" viewBox="0 0 25 25"><defs><radialGradient id="zg" cx=".4" cy=".4" r=".7"><stop offset="0" stop-color="#fff"/><stop offset="1" stop-color="#dfe6f5"/></radialGradient></defs>
<path d="M13.2 13.6 L21.6 21.2" stroke="#8a7048" stroke-width="4.2" stroke-linecap="round"/>
<path d="M13.4 13.8 L21.4 21" stroke="#ee9c3e" stroke-width="2.6" stroke-linecap="round"/>
<circle cx="8.3" cy="8.4" r="7.4" fill="url(#zg)" stroke="#8098c8" stroke-width="1.3"/><path d="M4.8 8.4 H11.8" stroke="#3a5ea8" stroke-width="1.7"/><path d="M8.3 4.9 V11.9" stroke="#3a5ea8" stroke-width="1.7"/></svg>
<svg style="left:1347px;top:852px;" width="25" height="25" viewBox="0 0 25 25"><g transform="translate(0.20 0.00)"><defs><radialGradient id="zg" cx=".4" cy=".4" r=".7"><stop offset="0" stop-color="#fff"/><stop offset="1" stop-color="#dfe6f5"/></radialGradient></defs>
<path d="M13.2 13.6 L21.6 21.2" stroke="#8a7048" stroke-width="4.2" stroke-linecap="round"/>
<path d="M13.4 13.8 L21.4 21" stroke="#ee9c3e" stroke-width="2.6" stroke-linecap="round"/>
<circle cx="8.3" cy="8.4" r="7.4" fill="url(#zg)" stroke="#8098c8" stroke-width="1.3"/></g></svg>
<svg style="left:1385px;top:853px;" width="23" height="23" viewBox="0 0 23 23"><rect x=".5" y=".5" width="21" height="20.6" fill="#c6d1f8" stroke="#a3ade6" stroke-width="1"/>
<rect x=".5" y="20.4" width="21" height="1.2" fill="#8a9aa8"/>
<path d="M1 1 H6.4 L1 6.4Z M21 1 V6.4 L15.6 1Z M1 20.4 V15 L6.4 20.4Z M21 20.4 H15.6 L21 15Z" fill="#2f6090"/>
<path d="M2 2 L6 6 M20 2 L16 6 M2 19.4 L6 15.4 M20 19.4 L16 15.4" stroke="#2f6090" stroke-width="1.4"/>
<rect x="6" y="6.2" width="10.2" height="8.8" fill="#fff"/></svg>
<span style="left:1423.80px;top:857.00px;font-size:17px;letter-spacing:-0.507px;">105%</span>
<div style="left:906px;top:881px;width:567px;height:18px;background:#e6e6e6;border:1px solid #bcbcbc;box-sizing:border-box;"></div></div>
<div class="win" style="left:1521px;top:0px;width:1512px;height:986px"><div style="left:0px;top:0px;width:1512px;height:986px;background:#eff0f2;"></div>
<div style="left:0px;top:0px;width:1512px;height:45px;background:#fff;"></div>
<div style="left:0px;top:0px;width:1512px;height:1px;background:#6f6f6f;"></div>
<div style="left:0px;top:0px;width:1px;height:986px;background:#6f6f6f;"></div>
<div style="left:1511px;top:0px;width:1px;height:986px;background:#6f6f6f;"></div>
<svg style="left:12px;top:10px;" width="26" height="25" viewBox="0 0 26 25"><ellipse cx="12" cy="22.9" rx="11.5" ry="1.3" fill="#000" opacity=".10"/>
<g fill="#d88b36"><rect x="6.6" y="0" width="3.7" height="8" rx="1.7" transform="rotate(-9 8.4 4)"/>
<rect x="14" y="0" width="3.7" height="8" rx="1.7" transform="rotate(9 15.8 4)"/>
<rect x="1.2" y="3.2" width="3.9" height="7.5" rx="1.8" transform="rotate(-42 3.1 7)"/>
<rect x="19.3" y="3.2" width="3.9" height="7.5" rx="1.8" transform="rotate(42 21.3 7)"/>
<path d="M.3 12.6 Q-.2 11.6 .8 10.6 L5 6 H19.4 L23.6 10.6 Q24.6 11.6 24 12.6 L16 21.6 Q15 22.8 13.6 22.8 H10.8 Q9.4 22.8 8.4 21.6 Z"/></g>
<circle cx="12.3" cy="12.8" r="5.5" fill="none" stroke="#f4f3ee" stroke-width="1.3"/>
<circle cx="12.3" cy="12.8" r="3.5" fill="#8a2a05"/><circle cx="12.3" cy="12.7" r="1.9" fill="#611400"/></svg>
<span style="left:40.90px;top:13.25px;font-size:19.5px;color:#98a1ac;letter-spacing:-1.070px;">Batch convert</span>
<div style="left:1331px;top:22px;width:15px;height:1px;background:#e6e6e6;"></div>
<div style="left:1400px;top:15px;width:15px;height:15px;border:1px solid #7a7a7a;box-sizing:border-box;"></div>
<svg style="left:1471px;top:15px;" width="17" height="17" viewBox="0 0 17 17"><path d="M.5 .5 L15 15 M15 .5 L.5 15" stroke="#7a7a7a" stroke-width="1.1" fill="none"/></svg>
<span style="left:17.50px;top:66.00px;font-size:17px;letter-spacing:-0.770px;">Presets:</span>
<svg style="left:90px;top:62px;" width="24" height="21" viewBox="0 0 24 21"><g transform="translate(0.50 0.50)"><defs><linearGradient id="fg" x1="0" y1="0" x2="0" y2="1"><stop offset="0" stop-color="#fde6ae"/><stop offset=".5" stop-color="#f9cf85"/><stop offset="1" stop-color="#efa24a"/></linearGradient></defs>
<path d="M1 4 Q1 1 3.5 1 H7.5 Q9 1 10 2.6 H18.5 Q19.8 2.6 19.8 4 V8 H1 Z" fill="#f6c676" stroke="#c9781f" stroke-width="1"/>
<rect x="1" y="5.3" width="21" height="13.2" rx="1.8" fill="url(#fg)" stroke="#c9781f" stroke-width="1"/>
<path d="M11.6 7.5 H16 V11.8 H19 L13.8 17.6 L8.6 11.8 H11.6 Z" fill="#84c81c" stroke="#5a9c14" stroke-width=".6"/></g></svg>
<div style="left:129px;top:58px;width:183px;height:29px;background:#e1e1e1;border:1px solid #adadad;box-sizing:border-box;"></div>
<svg style="left:292px;top:68px;" width="13" height="9" viewBox="0 0 13 9"><g transform="translate(0.40 0.80)"><path d="M0.6 1 L5.8 6.2 L11 1" fill="none" stroke="#333" stroke-width="1.15"/></g></svg>
<svg style="left:326px;top:62px;" width="21" height="21" viewBox="0 0 21 21"><g transform="translate(0.60 0.60)"><path d="M1.2 .6 H16.6 L18.6 2.6 V18.4 H.6 V1.2 Q.6 .6 1.2 .6Z" fill="#9ea2e3" stroke="#456fa6" stroke-width="1"/>
<rect x="4.6" y=".8" width="9.8" height="5.8" fill="#e9e9e9"/><rect x="10.6" y="1.6" width="2.2" height="4" fill="#3e6698"/>
<path d="M4.6 .8 L8.5 6.6 H4.6Z" fill="#c9c9c9"/>
<rect x="3.2" y="9.4" width="12.8" height="9" fill="#f5f5f5"/><rect x="1" y="7.6" width="17" height="1.2" fill="#7f9ad0" opacity=".8"/></g></svg>
<svg style="left:371px;top:63px;" width="21" height="21" viewBox="0 0 21 21"><g transform="translate(0.60 0.00)"><defs><linearGradient id="gx" x1="0" y1="0" x2="0" y2="1"><stop offset="0" stop-color="#cfd1cf"/><stop offset="1" stop-color="#9b9e9b"/></linearGradient></defs>
<path d="M4.4 .5 L9.6 5.7 L14.8 .5 L18.7 4.4 L13.5 9.6 L18.7 14.8 L14.8 18.7 L9.6 13.5 L4.4 18.7 L.5 14.8 L5.7 9.6 L.5 4.4 Z" fill="url(#gx)" stroke="#8d908d" stroke-width=".8"/></g></svg>
<svg style="left:1446px;top:59px;" width="37" height="37" viewBox="0 0 37 37"><g transform="translate(0.00 0.40)"><defs><linearGradient id="gg" x1="0" y1="0" x2="1" y2="1"><stop offset="0" stop-color="#c9d2f6"/><stop offset=".3" stop-color="#f4f6fd"/><stop offset=".55" stop-color="#bfc8f2"/><stop offset="1" stop-color="#a9ace2"/></linearGradient>
<linearGradient id="gg2" x1="0" y1="0" x2="0" y2="1"><stop offset="0" stop-color="#869fd0"/><stop offset=".6" stop-color="#aaa9e2"/><stop offset="1" stop-color="#c3ccf4"/></linearGradient></defs>
<path d="M18.76 4.82 L20.90 0.84 L24.07 1.69 L23.93 6.21 L25.25 6.97 L29.09 4.59 L31.41 6.91 L29.03 10.75 L29.79 12.07 L34.31 11.93 L35.16 15.10 L31.18 17.24 L31.18 18.76 L35.16 20.90 L34.31 24.07 L29.79 23.93 L29.03 25.25 L31.41 29.09 L29.09 31.41 L25.25 29.03 L23.93 29.79 L24.07 34.31 L20.90 35.16 L18.76 31.18 L17.24 31.18 L15.10 35.16 L11.93 34.31 L12.07 29.79 L10.75 29.03 L6.91 31.41 L4.59 29.09 L6.97 25.25 L6.21 23.93 L1.69 24.07 L0.84 20.90 L4.82 18.76 L4.82 17.24 L0.84 15.10 L1.69 11.93 L6.21 12.07 L6.97 10.75 L4.59 6.91 L6.91 4.59 L10.75 6.97 L12.07 6.21 L11.93 1.69 L15.10 0.84 L17.24 4.82Z" fill="#b1b4e6" stroke="#5c83aa" stroke-width="1" stroke-linejoin="round"/>
<circle cx="18" cy="18" r="12.6" fill="url(#gg)"/>
<circle cx="18" cy="18" r="8.8" fill="url(#gg2)" stroke="#6f8fbd" stroke-width=".8"/>
<circle cx="18" cy="18" r="3.9" fill="#eef0f2" stroke="#6f8fbd" stroke-width=".8"/></g></svg>
<div style="left:15px;top:109px;width:179px;height:807px;background:#fff;"></div>
<div style="left:16px;top:110px;width:177px;height:1px;background:#eff0f2;"></div>
<div style="left:16px;top:110px;width:1px;height:805px;background:#eff0f2;"></div>
<div style="left:16px;top:914px;width:177px;height:1px;background:#eff0f2;"></div>
<div style="left:193px;top:109px;width:1px;height:807px;background:#7b7d80;"></div>
<span style="left:33.60px;top:120.25px;font-size:18.5px;font-weight:bold;letter-spacing:-0.388px">Input<span style="position:static;font-weight:normal">: 12 file(s)</span></span>
<span style="left:30.40px;top:163.25px;font-size:18.5px;font-weight:bold;letter-spacing:-0.483px">Actions<span style="position:static;font-weight:normal">: 4/5</span></span>
<div style="left:18px;top:206px;width:173px;height:27px;background:#d9d9d9;"></div>
<span style="left:31.60px;top:209.25px;font-size:18.5px;font-weight:bold;letter-spacing:-0.056px">Output</span>
<span style="left:31.30px;top:246.25px;font-size:18.5px;font-weight:bold;letter-spacing:-0.842px">Status</span>
<span style="left:217.60px;top:108.50px;font-size:24px;font-weight:bold;letter-spacing:0.336px;">Output</span>
<div style="left:14px;top:934px;width:200px;height:34px;background:#e1e1e1;border:1px solid #adadad;box-sizing:border-box;"></div>
<svg style="left:21px;top:939px;" width="22" height="25" viewBox="0 0 22 25"><defs><linearGradient id="ep" x1="0" y1="0" x2="0" y2="1"><stop offset="0" stop-color="#f4f4f6"/><stop offset="1" stop-color="#e4e4e6"/></linearGradient></defs>
<rect x=".6" y="1.6" width="17.4" height="21" rx="1.6" fill="url(#ep)" stroke="#a9afe4" stroke-width="1.1"/>
<path d="M1.2 21.2 Q1.2 22.6 2.6 22.6 H16 Q17.6 22.6 17.6 21.2" fill="none" stroke="#5d7186" stroke-width="1.1"/>
<path d="M10 .2 H20.2 V9.4 L17 7.6 L11.6 12 L7.8 7.8 L12.2 3.6Z" fill="#97d200"/>
<path d="M20.2 9.4 L17 7.6 L11.6 12 L10.6 10.8 L17 6 L20.2 7.6Z" fill="#4f9a2a" opacity=".8"/></svg>
<span style="left:46.00px;top:944.00px;font-size:17px;letter-spacing:-0.266px;">Export for NConvert...</span>
<div style="left:1263px;top:932px;width:111px;height:34px;background:#e1e1e1;border:1px solid #adadad;box-sizing:border-box;"></div>
<svg style="left:1274px;top:937px;" width="26" height="22" viewBox="0 0 26 22"><g transform="translate(0.00 0.60)"><rect x=".6" y=".6" width="18.6" height="16.6" rx="1.2" fill="#fff" stroke="#6a8bb8" stroke-width="1"/>
<rect x="2.4" y="2.4" width="15" height="12" fill="#b9bef0"/>
<rect x="5.8" y="4.6" width="18.4" height="15.2" rx="1.2" fill="#fff" stroke="#5f7f9f" stroke-width="1"/>
<rect x="7.6" y="6.4" width="14.8" height="11.6" fill="#f5ba0c"/>
<path d="M7.6 18 L15 9.5 L18 12.2 L22.4 10.6 V18Z" fill="#a8540e"/><path d="M12 13 L15 9.5 L18 12.2 L20 11.5 L16 14.5Z" fill="#eaa968"/>
<path d="M5.8 19.6 H24.2" stroke="#333" stroke-width="1.2"/>
<path d="M2.4 9.4 Q2.4 6.4 5.4 6.4 H8.8 V4.4 L14.4 10.6 L8.8 16.8 V14.6 H6 Q2.4 14.6 2.4 11.2Z" fill="#8fd000" stroke="#5a9c14" stroke-width=".5"/></g></svg>
<span style="left:1301.50px;top:942.00px;font-size:17px;letter-spacing:-0.567px;">Convert</span>
<div style="left:1385px;top:932px;width:110px;height:33px;background:#e1e1e1;border:1px solid #adadad;box-sizing:border-box;"></div>
<span style="left:1420.20px;top:941.00px;font-size:17px;letter-spacing:-1.180px;">Close</span>
<div style="left:217px;top:156px;width:1275px;height:109px;border:1px solid #dcdcdc;box-sizing:border-box;"></div>
<div style="left:228px;top:154px;width:58.89999999999998px;height:5px;background:#eff0f2;"></div>
<span style="left:232.00px;top:150.00px;font-size:17px;letter-spacing:-0.220px;">Output</span>
<div style="left:232px;top:178px;width:84px;height:29px;background:#e1e1e1;border:1px solid #adadad;box-sizing:border-box;"></div>
<svg style="left:296px;top:188px;" width="13" height="9" viewBox="0 0 13 9"><g transform="translate(0.40 0.80)"><path d="M0.6 1 L5.8 6.2 L11 1" fill="none" stroke="#333" stroke-width="1.15"/></g></svg>
<span style="left:238.00px;top:185.00px;font-size:17px;letter-spacing:-0.742px;">Folder</span>
<svg style="left:337px;top:180px;" width="23" height="23" viewBox="0 0 23 23"><g transform="translate(0.40 0.40)"><circle cx="11" cy="11" r="9.4" fill="#fff" stroke="#333" stroke-width="1.1"/><circle cx="11" cy="11" r="4.9" fill="#333"/></g></svg>
<span style="left:367.00px;top:185.00px;font-size:17px;letter-spacing:-0.454px;">Source folder</span>
<svg style="left:337px;top:222px;" width="23" height="23" viewBox="0 0 23 23"><g transform="translate(0.40 0.80)"><circle cx="11" cy="11" r="9.4" fill="#fff" stroke="#333" stroke-width="1.1"/></g></svg>
<span style="left:367.00px;top:228.00px;font-size:17px;letter-spacing:-0.702px;">Folder</span>
<div style="left:442px;top:218px;width:903px;height:31px;background:#fff;border:1px solid #e3e3e3;box-sizing:border-box;"></div>
<div style="left:446px;top:222px;width:870px;height:23px;background:#eff0f2;"></div>
<svg style="left:1325px;top:230px;" width="13" height="9" viewBox="0 0 13 9"><g transform="translate(0.80 0.30)"><path d="M0.6 1 L5.8 6.2 L11 1" fill="none" stroke="#9a9a9a" stroke-width="1.15"/></g></svg>
<div style="left:1355px;top:219px;width:32px;height:31px;background:#cccccc;"></div>
<span style="left:1363.50px;top:225.50px;font-size:16px;color:#8391a1;">...</span>
<div style="left:1398px;top:219px;width:51px;height:31px;background:#cccccc;"></div>
<svg style="left:1403px;top:223px;" width="23" height="23" viewBox="0 0 23 23"><path d="M11 1.4 L13.9 8.1 L21 8.8 L15.6 13.5 L17.3 20.6 L11 16.8 L4.7 20.6 L6.4 13.5 L1 8.8 L8.1 8.1Z" fill="#d6d6d6" stroke="#f4f4f4" stroke-width="1.3" stroke-linejoin="round"/></svg>
<div style="left:1426px;top:222px;width:2px;height:24px;background:#f0f0f0;"></div>
<svg style="left:1433px;top:231px;" width="12" height="8" viewBox="0 0 12 8"><path d="M0 0 H10.4 L5.2 6Z" fill="#7d8792"/><path d="M5.2 6 L10.4 0 L9 0 L4.5 5Z" fill="#e8e8e8"/></svg>
<div style="left:217px;top:284px;width:951px;height:117px;border:1px solid #dcdcdc;box-sizing:border-box;"></div>
<div style="left:228px;top:282px;width:74.10000000000002px;height:5px;background:#eff0f2;"></div>
<span style="left:232.00px;top:277.00px;font-size:17px;letter-spacing:-0.681px;">Filename</span>
<span style="left:235.30px;top:322.00px;font-size:17px;letter-spacing:-0.753px;">Filename</span>
<div style="left:310px;top:314px;width:796px;height:28px;background:#fff;border:1px solid #7a7a7a;box-sizing:border-box;"></div>
<span style="left:317.90px;top:322.00px;font-size:17px;letter-spacing:-0.154px;">{Filename}_result</span>
<svg style="left:1087px;top:324px;" width="13" height="9" viewBox="0 0 13 9"><g transform="translate(0.00 0.30)"><path d="M0.6 1 L5.8 6.2 L11 1" fill="none" stroke="#333" stroke-width="1.15"/></g></svg>
<div style="left:1116px;top:313px;width:33px;height:31px;background:#e1e1e1;border:1px solid #adadad;box-sizing:border-box;"></div>
<svg style="left:1126px;top:320px;" width="12" height="19" viewBox="0 0 12 19"><g transform="translate(0.40 0.00)"><path d="M0 0 L9.6 8.6 L0 17.2Z" fill="#000"/></g></svg>
<span style="left:311.00px;top:362.00px;font-size:17px;letter-spacing:-1.670px;">Case</span>
<div style="left:356px;top:354px;width:251px;height:29px;background:#e1e1e1;border:1px solid #adadad;box-sizing:border-box;"></div>
<svg style="left:587px;top:364px;" width="13" height="9" viewBox="0 0 13 9"><g transform="translate(0.40 0.80)"><path d="M0.6 1 L5.8 6.2 L11 1" fill="none" stroke="#333" stroke-width="1.15"/></g></svg>
<span style="left:362.30px;top:361.00px;font-size:17px;letter-spacing:-0.648px;">No change</span>
<span style="left:675.10px;top:362.00px;font-size:17px;letter-spacing:-0.206px;">Start index</span>
<div style="left:764px;top:354px;width:68px;height:29px;background:#fff;border:1px solid #555;box-sizing:border-box;"></div>
<span style="left:770.50px;top:362.00px;font-size:17px;">1</span>
<div style="left:807px;top:357px;width:23px;height:11px;background:#f0f0f0;border:1px solid #b5b5b5;box-sizing:border-box;"></div>
<div style="left:807px;top:368px;width:23px;height:12px;background:#f0f0f0;border:1px solid #b5b5b5;box-sizing:border-box;"></div>
<svg style="left:813px;top:360px;" width="11" height="8" viewBox="0 0 11 8"><g transform="translate(0.50 0.00)"><path d="M0 6 L4.8 .6 L9.6 6Z" fill="#000"/></g></svg>
<svg style="left:813px;top:371px;" width="11" height="8" viewBox="0 0 11 8"><g transform="translate(0.50 0.00)"><path d="M0 .6 L4.8 6 L9.6 .6Z" fill="#000"/></g></svg>
<div style="left:1177px;top:284px;width:315px;height:117px;border:1px solid #dcdcdc;box-sizing:border-box;"></div>
<div style="left:1187px;top:282px;width:60.5px;height:5px;background:#eff0f2;"></div>
<span style="left:1191.00px;top:277.00px;font-size:17px;letter-spacing:-0.478px;">Format</span>
<div style="left:1195px;top:314px;width:279px;height:28px;background:#e1e1e1;border:1px solid #adadad;box-sizing:border-box;"></div>
<svg style="left:1454px;top:324px;" width="13" height="9" viewBox="0 0 13 9"><g transform="translate(0.40 0.30)"><path d="M0.6 1 L5.8 6.2 L11 1" fill="none" stroke="#333" stroke-width="1.15"/></g></svg>
<span style="left:1200.20px;top:321.00px;font-size:17px;letter-spacing:-0.463px;">Same as original</span>
<div style="left:1196px;top:354px;width:277px;height:28px;background:#e1e1e1;border:1px solid #adadad;box-sizing:border-box;"></div>
<span style="left:1297.40px;top:360.00px;font-size:17px;letter-spacing:-0.335px;">Settings...</span>
<div style="left:217px;top:422px;width:489px;height:296px;border:1px solid #dcdcdc;box-sizing:border-box;"></div>
<div style="left:227.7px;top:420px;width:65.0px;height:5px;background:#eff0f2;"></div>
<span style="left:231.70px;top:416.00px;font-size:17px;letter-spacing:-0.442px;">Options</span>
<span style="left:235.60px;top:458.00px;font-size:17px;letter-spacing:-0.115px;">If an output file already exists</span>
<div style="left:463px;top:451px;width:98px;height:28px;background:#e1e1e1;border:1px solid #adadad;box-sizing:border-box;"></div>
<svg style="left:541px;top:461px;" width="13" height="9" viewBox="0 0 13 9"><g transform="translate(0.40 0.30)"><path d="M0.6 1 L5.8 6.2 L11 1" fill="none" stroke="#333" stroke-width="1.15"/></g></svg>
<span style="left:469.40px;top:457.00px;font-size:17px;letter-spacing:-1.830px;">Ask</span>
<div style="left:235px;top:493px;width:19px;height:19px;background:#eff0f2;border:1px solid #c8c8c8;box-sizing:border-box;"></div>
<span style="left:262.20px;top:496.00px;font-size:17px;color:#85908f;letter-spacing:-0.263px;">Keep folder structure</span>
<div style="left:283px;top:531px;width:19px;height:19px;background:#eff0f2;border:1px solid #c8c8c8;box-sizing:border-box;"></div>
<span style="left:310.50px;top:533.00px;font-size:17px;color:#85908f;letter-spacing:-0.354px;">Keep parent folder</span>
<div style="left:235px;top:568px;width:19px;height:19px;background:#fff;border:1px solid #333;box-sizing:border-box;"></div>
<span style="left:262.20px;top:571.00px;font-size:17px;letter-spacing:-0.144px;">Keep original date/time attributes</span>
<div style="left:235px;top:604px;width:19px;height:19px;background:#fff;border:1px solid #333;box-sizing:border-box;"></div>
<span style="left:262.20px;top:607.00px;font-size:17px;letter-spacing:-0.531px;">Preserve extension</span>
<div style="left:235px;top:640px;width:19px;height:19px;background:#fff;border:1px solid #333;box-sizing:border-box;"></div>
<svg style="left:235px;top:640px;" width="20" height="20" viewBox="0 0 20 20"><path d="M3.0 9.7 L7.4 14.1 L15.8 5.1" fill="none" stroke="#333" stroke-width="1.7"/></svg>
<span style="left:262.20px;top:643.00px;font-size:17px;letter-spacing:-0.572px;">Preserve Metadata</span>
<div style="left:235px;top:676px;width:19px;height:19px;background:#fff;border:1px solid #333;box-sizing:border-box;"></div>
<span style="left:262.20px;top:679.00px;font-size:17px;letter-spacing:-0.360px;">Preserve color profile</span>
<div style="left:715px;top:422px;width:777px;height:109px;border:1px solid #dcdcdc;box-sizing:border-box;"></div>
<div style="left:725.5px;top:420px;width:79.5px;height:5px;background:#eff0f2;"></div>
<span style="left:729.50px;top:416.00px;font-size:17px;letter-spacing:-0.410px;">Multipage</span>
<div style="left:733px;top:454px;width:19px;height:19px;background:#fff;border:1px solid #333;box-sizing:border-box;"></div>
<span style="left:759.40px;top:457.00px;font-size:17px;letter-spacing:-0.158px;">Convert multipage file to multipage file (when possible)</span>
<div style="left:733px;top:490px;width:19px;height:19px;background:#fff;border:1px solid #333;box-sizing:border-box;"></div>
<span style="left:759.40px;top:493.00px;font-size:17px;letter-spacing:-0.206px;">Convert all pages from multipage file</span></div>
<div class="win" style="left:0px;top:996px;width:1512px;height:986px"><div style="left:0px;top:0px;width:1512px;height:986px;background:#eff0f2;"></div>
<div style="left:0px;top:0px;width:1512px;height:45px;background:#fff;"></div>
<div style="left:0px;top:0px;width:1512px;height:1px;background:#6f6f6f;"></div>
<div style="left:0px;top:0px;width:1px;height:986px;background:#6f6f6f;"></div>
<div style="left:1511px;top:0px;width:1px;height:986px;background:#6f6f6f;"></div>
<svg style="left:12px;top:10px;" width="26" height="25" viewBox="0 0 26 25"><ellipse cx="12" cy="22.9" rx="11.5" ry="1.3" fill="#000" opacity=".10"/>
<g fill="#d88b36"><rect x="6.6" y="0" width="3.7" height="8" rx="1.7" transform="rotate(-9 8.4 4)"/>
<rect x="14" y="0" width="3.7" height="8" rx="1.7" transform="rotate(9 15.8 4)"/>
<rect x="1.2" y="3.2" width="3.9" height="7.5" rx="1.8" transform="rotate(-42 3.1 7)"/>
<rect x="19.3" y="3.2" width="3.9" height="7.5" rx="1.8" transform="rotate(42 21.3 7)"/>
<path d="M.3 12.6 Q-.2 11.6 .8 10.6 L5 6 H19.4 L23.6 10.6 Q24.6 11.6 24 12.6 L16 21.6 Q15 22.8 13.6 22.8 H10.8 Q9.4 22.8 8.4 21.6 Z"/></g>
<circle cx="12.3" cy="12.8" r="5.5" fill="none" stroke="#f4f3ee" stroke-width="1.3"/>
<circle cx="12.3" cy="12.8" r="3.5" fill="#8a2a05"/><circle cx="12.3" cy="12.7" r="1.9" fill="#611400"/></svg>
<span style="left:40.90px;top:13.25px;font-size:19.5px;color:#98a1ac;letter-spacing:-1.070px;">Batch convert</span>
<div style="left:1331px;top:22px;width:15px;height:1px;background:#e6e6e6;"></div>
<div style="left:1400px;top:15px;width:15px;height:15px;border:1px solid #7a7a7a;box-sizing:border-box;"></div>
<svg style="left:1471px;top:15px;" width="17" height="17" viewBox="0 0 17 17"><path d="M.5 .5 L15 15 M15 .5 L.5 15" stroke="#7a7a7a" stroke-width="1.1" fill="none"/></svg>
<span style="left:17.50px;top:66.00px;font-size:17px;letter-spacing:-0.770px;">Presets:</span>
<svg style="left:90px;top:62px;" width="24" height="21" viewBox="0 0 24 21"><g transform="translate(0.50 0.50)"><defs><linearGradient id="fg" x1="0" y1="0" x2="0" y2="1"><stop offset="0" stop-color="#fde6ae"/><stop offset=".5" stop-color="#f9cf85"/><stop offset="1" stop-color="#efa24a"/></linearGradient></defs>
<path d="M1 4 Q1 1 3.5 1 H7.5 Q9 1 10 2.6 H18.5 Q19.8 2.6 19.8 4 V8 H1 Z" fill="#f6c676" stroke="#c9781f" stroke-width="1"/>
<rect x="1" y="5.3" width="21" height="13.2" rx="1.8" fill="url(#fg)" stroke="#c9781f" stroke-width="1"/>
<path d="M11.6 7.5 H16 V11.8 H19 L13.8 17.6 L8.6 11.8 H11.6 Z" fill="#84c81c" stroke="#5a9c14" stroke-width=".6"/></g></svg>
<div style="left:129px;top:58px;width:183px;height:29px;background:#e1e1e1;border:1px solid #adadad;box-sizing:border-box;"></div>
<svg style="left:292px;top:68px;" width="13" height="9" viewBox="0 0 13 9"><g transform="translate(0.40 0.80)"><path d="M0.6 1 L5.8 6.2 L11 1" fill="none" stroke="#333" stroke-width="1.15"/></g></svg>
<svg style="left:326px;top:62px;" width="21" height="21" viewBox="0 0 21 21"><g transform="translate(0.60 0.60)"><path d="M1.2 .6 H16.6 L18.6 2.6 V18.4 H.6 V1.2 Q.6 .6 1.2 .6Z" fill="#9ea2e3" stroke="#456fa6" stroke-width="1"/>
<rect x="4.6" y=".8" width="9.8" height="5.8" fill="#e9e9e9"/><rect x="10.6" y="1.6" width="2.2" height="4" fill="#3e6698"/>
<path d="M4.6 .8 L8.5 6.6 H4.6Z" fill="#c9c9c9"/>
<rect x="3.2" y="9.4" width="12.8" height="9" fill="#f5f5f5"/><rect x="1" y="7.6" width="17" height="1.2" fill="#7f9ad0" opacity=".8"/></g></svg>
<svg style="left:371px;top:63px;" width="21" height="21" viewBox="0 0 21 21"><g transform="translate(0.60 0.00)"><defs><linearGradient id="gx" x1="0" y1="0" x2="0" y2="1"><stop offset="0" stop-color="#cfd1cf"/><stop offset="1" stop-color="#9b9e9b"/></linearGradient></defs>
<path d="M4.4 .5 L9.6 5.7 L14.8 .5 L18.7 4.4 L13.5 9.6 L18.7 14.8 L14.8 18.7 L9.6 13.5 L4.4 18.7 L.5 14.8 L5.7 9.6 L.5 4.4 Z" fill="url(#gx)" stroke="#8d908d" stroke-width=".8"/></g></svg>
<svg style="left:1446px;top:59px;" width="37" height="37" viewBox="0 0 37 37"><g transform="translate(0.00 0.40)"><defs><linearGradient id="gg" x1="0" y1="0" x2="1" y2="1"><stop offset="0" stop-color="#c9d2f6"/><stop offset=".3" stop-color="#f4f6fd"/><stop offset=".55" stop-color="#bfc8f2"/><stop offset="1" stop-color="#a9ace2"/></linearGradient>
<linearGradient id="gg2" x1="0" y1="0" x2="0" y2="1"><stop offset="0" stop-color="#869fd0"/><stop offset=".6" stop-color="#aaa9e2"/><stop offset="1" stop-color="#c3ccf4"/></linearGradient></defs>
<path d="M18.76 4.82 L20.90 0.84 L24.07 1.69 L23.93 6.21 L25.25 6.97 L29.09 4.59 L31.41 6.91 L29.03 10.75 L29.79 12.07 L34.31 11.93 L35.16 15.10 L31.18 17.24 L31.18 18.76 L35.16 20.90 L34.31 24.07 L29.79 23.93 L29.03 25.25 L31.41 29.09 L29.09 31.41 L25.25 29.03 L23.93 29.79 L24.07 34.31 L20.90 35.16 L18.76 31.18 L17.24 31.18 L15.10 35.16 L11.93 34.31 L12.07 29.79 L10.75 29.03 L6.91 31.41 L4.59 29.09 L6.97 25.25 L6.21 23.93 L1.69 24.07 L0.84 20.90 L4.82 18.76 L4.82 17.24 L0.84 15.10 L1.69 11.93 L6.21 12.07 L6.97 10.75 L4.59 6.91 L6.91 4.59 L10.75 6.97 L12.07 6.21 L11.93 1.69 L15.10 0.84 L17.24 4.82Z" fill="#b1b4e6" stroke="#5c83aa" stroke-width="1" stroke-linejoin="round"/>
<circle cx="18" cy="18" r="12.6" fill="url(#gg)"/>
<circle cx="18" cy="18" r="8.8" fill="url(#gg2)" stroke="#6f8fbd" stroke-width=".8"/>
<circle cx="18" cy="18" r="3.9" fill="#eef0f2" stroke="#6f8fbd" stroke-width=".8"/></g></svg>
<div style="left:15px;top:109px;width:179px;height:807px;background:#fff;"></div>
<div style="left:16px;top:110px;width:177px;height:1px;background:#eff0f2;"></div>
<div style="left:16px;top:110px;width:1px;height:805px;background:#eff0f2;"></div>
<div style="left:16px;top:914px;width:177px;height:1px;background:#eff0f2;"></div>
<div style="left:193px;top:109px;width:1px;height:807px;background:#7b7d80;"></div>
<span style="left:33.60px;top:120.25px;font-size:18.5px;font-weight:bold;letter-spacing:-0.388px">Input<span style="position:static;font-weight:normal">: 12 file(s)</span></span>
<span style="left:30.40px;top:163.25px;font-size:18.5px;font-weight:bold;letter-spacing:-0.483px">Actions<span style="position:static;font-weight:normal">: 4/5</span></span>
<span style="left:31.60px;top:205.25px;font-size:18.5px;font-weight:bold;letter-spacing:-0.056px">Output</span>
<div style="left:18px;top:243px;width:173px;height:27px;background:#d9d9d9;"></div>
<span style="left:31.30px;top:247.25px;font-size:18.5px;font-weight:bold;letter-spacing:-0.842px">Status</span>
<span style="left:219.20px;top:110.50px;font-size:24px;font-weight:bold;letter-spacing:-0.848px;">Status</span>
<div style="left:14px;top:934px;width:200px;height:34px;background:#e1e1e1;border:1px solid #adadad;box-sizing:border-box;"></div>
<svg style="left:21px;top:939px;" width="22" height="25" viewBox="0 0 22 25"><defs><linearGradient id="ep" x1="0" y1="0" x2="0" y2="1"><stop offset="0" stop-color="#f4f4f6"/><stop offset="1" stop-color="#e4e4e6"/></linearGradient></defs>
<rect x=".6" y="1.6" width="17.4" height="21" rx="1.6" fill="url(#ep)" stroke="#a9afe4" stroke-width="1.1"/>
<path d="M1.2 21.2 Q1.2 22.6 2.6 22.6 H16 Q17.6 22.6 17.6 21.2" fill="none" stroke="#5d7186" stroke-width="1.1"/>
<path d="M10 .2 H20.2 V9.4 L17 7.6 L11.6 12 L7.8 7.8 L12.2 3.6Z" fill="#97d200"/>
<path d="M20.2 9.4 L17 7.6 L11.6 12 L10.6 10.8 L17 6 L20.2 7.6Z" fill="#4f9a2a" opacity=".8"/></svg>
<span style="left:46.00px;top:944.00px;font-size:17px;letter-spacing:-0.266px;">Export for NConvert...</span>
<div style="left:1263px;top:932px;width:111px;height:34px;background:#e1e1e1;border:1px solid #adadad;box-sizing:border-box;"></div>
<svg style="left:1274px;top:937px;" width="26" height="22" viewBox="0 0 26 22"><g transform="translate(0.00 0.60)"><rect x=".6" y=".6" width="18.6" height="16.6" rx="1.2" fill="#fff" stroke="#6a8bb8" stroke-width="1"/>
<rect x="2.4" y="2.4" width="15" height="12" fill="#b9bef0"/>
<rect x="5.8" y="4.6" width="18.4" height="15.2" rx="1.2" fill="#fff" stroke="#5f7f9f" stroke-width="1"/>
<rect x="7.6" y="6.4" width="14.8" height="11.6" fill="#f5ba0c"/>
<path d="M7.6 18 L15 9.5 L18 12.2 L22.4 10.6 V18Z" fill="#a8540e"/><path d="M12 13 L15 9.5 L18 12.2 L20 11.5 L16 14.5Z" fill="#eaa968"/>
<path d="M5.8 19.6 H24.2" stroke="#333" stroke-width="1.2"/>
<path d="M2.4 9.4 Q2.4 6.4 5.4 6.4 H8.8 V4.4 L14.4 10.6 L8.8 16.8 V14.6 H6 Q2.4 14.6 2.4 11.2Z" fill="#8fd000" stroke="#5a9c14" stroke-width=".5"/></g></svg>
<span style="left:1301.50px;top:942.00px;font-size:17px;letter-spacing:-0.567px;">Convert</span>
<div style="left:1385px;top:932px;width:110px;height:33px;background:#e1e1e1;border:1px solid #adadad;box-sizing:border-box;"></div>
<span style="left:1420.20px;top:941.00px;font-size:17px;letter-spacing:-1.180px;">Close</span>
<svg style="left:163px;top:249px;" width="15" height="15" viewBox="0 0 15 15"><g transform="translate(0.00 0.60)"><circle cx="6.7" cy="6.6" r="6.1" fill="#1fb14c"/></g></svg>
<span style="left:220.00px;top:155.00px;font-size:17px;letter-spacing:-0.244px;">Processing list:  12 of 12 files</span>
<div style="left:220px;top:186px;width:1267px;height:643px;background:#fff;border:1px solid #7a7a7a;box-sizing:border-box;"></div>
<div style="left:1461px;top:187px;width:25px;height:641px;background:#f0f1f3;"></div>
<div style="left:1461px;top:530px;width:24px;height:272px;background:#cdcdcd;"></div>
<svg style="left:1467px;top:196px;" width="12" height="9" viewBox="0 0 12 9"><g transform="translate(0.40 0.60)"><path d="M.8 7 L5.4 2.2 L10 7" fill="none" stroke="#3c4f5e" stroke-width="1.7"/></g></svg>
<svg style="left:1467px;top:811px;" width="12" height="9" viewBox="0 0 12 9"><g transform="translate(0.40 0.40)"><path d="M.8 1 L5.4 5.8 L10 1" fill="none" stroke="#3c4f5e" stroke-width="1.7"/></g></svg>
<span style="left:227.40px;top:211.00px;font-size:17px;letter-spacing:-0.233px;">D:\PROG\feedback\xn\_test_img\batch_3\plane_8.png 500x500x8 : loaded</span>
<span style="left:227.40px;top:232.00px;font-size:17px;letter-spacing:-0.227px;">D:\PROG\feedback\xn\_test_img\batch_3\plane_8_result.png : saved</span>
<span style="left:467.60px;top:253.00px;font-size:17px;letter-spacing:-0.145px;">151.24 KiB -&gt; 151.24 KiB (0%)</span>
<span style="left:227.40px;top:295.00px;font-size:17px;letter-spacing:-0.218px;">D:\PROG\feedback\xn\_test_img\batch_3\plane_8_gray.png 500x500x8 : loaded</span>
<span style="left:227.40px;top:316.00px;font-size:17px;letter-spacing:-0.230px;">D:\PROG\feedback\xn\_test_img\batch_3\plane_8_gray_result.png : saved</span>
<span style="left:467.60px;top:337.00px;font-size:17px;letter-spacing:-0.145px;">152.91 KiB -&gt; 152.91 KiB (0%)</span>
<span style="left:227.40px;top:379.00px;font-size:17px;letter-spacing:-0.236px;">D:\PROG\feedback\xn\_test_img\batch_3\plane_32.png 500x500x32 : loaded</span>
<span style="left:227.40px;top:400.00px;font-size:17px;letter-spacing:-0.223px;">D:\PROG\feedback\xn\_test_img\batch_3\plane_32_result.png : saved</span>
<span style="left:467.60px;top:421.00px;font-size:17px;letter-spacing:-0.159px;">486.82 KiB -&gt; 151.24 KiB (68%)</span>
<span style="left:227.40px;top:463.00px;font-size:17px;letter-spacing:-0.244px;">D:\PROG\feedback\xn\_test_img\batch_3\plane_32_a.png 500x500x32 : loaded</span>
<span style="left:227.40px;top:484.00px;font-size:17px;letter-spacing:-0.236px;">D:\PROG\feedback\xn\_test_img\batch_3\plane_32_a_result.png : saved</span>
<span style="left:467.60px;top:505.00px;font-size:17px;letter-spacing:-0.159px;">499.99 KiB -&gt; 148.69 KiB (70%)</span>
<span style="left:227.40px;top:568.00px;font-size:17px;letter-spacing:0.061px;">Input files: 12</span>
<span style="left:227.40px;top:589.00px;font-size:17px;letter-spacing:-0.329px;">Extracted pages: 12</span>
<span style="left:227.40px;top:610.00px;font-size:17px;letter-spacing:-0.220px;">New files: 12</span>
<span style="left:227.40px;top:652.00px;font-size:17px;letter-spacing:-0.123px;">Total input file size: 1.44 MiB</span>
<span style="left:227.40px;top:673.00px;font-size:17px;letter-spacing:-0.140px;">Total output file size: 794.57 KiB</span>
<span style="left:227.40px;top:694.00px;font-size:17px;letter-spacing:-0.213px;">File size ratio: 46%</span>
<span style="left:227.40px;top:737.00px;font-size:17px;letter-spacing:-0.121px;">Total Duration: 0 second(s)</span>
<span style="left:227.40px;top:779.00px;font-size:17px;letter-spacing:-0.266px;">Finished at: Sat Dec 17 21:15:45 2022</span>
<div style="left:220px;top:838px;width:1267px;height:32px;background:#06b025;border:1px solid #bcbcbc;box-sizing:border-box;"></div>
<span style="left:220.00px;top:886.00px;font-size:17px;letter-spacing:-0.141px;">Estimated end time:  21:15:45</span>
<span style="left:944.30px;top:886.00px;font-size:17px;letter-spacing:-0.480px;">Remaining:</span></div>
<div class="win" style="left:1522px;top:997px;width:1512px;height:985px"><div style="left:0px;top:0px;width:1512px;height:985px;background:#eff0f2;"></div>
<div style="left:0px;top:0px;width:1512px;height:45px;background:#fff;"></div>
<div style="left:0px;top:0px;width:1512px;height:1px;background:#6f6f6f;"></div>
<div style="left:0px;top:0px;width:1px;height:985px;background:#6f6f6f;"></div>
<div style="left:1511px;top:0px;width:1px;height:985px;background:#6f6f6f;"></div>
<svg style="left:12px;top:10px;" width="26" height="25" viewBox="0 0 26 25"><ellipse cx="12" cy="22.9" rx="11.5" ry="1.3" fill="#000" opacity=".10"/>
<g fill="#d88b36"><rect x="6.6" y="0" width="3.7" height="8" rx="1.7" transform="rotate(-9 8.4 4)"/>
<rect x="14" y="0" width="3.7" height="8" rx="1.7" transform="rotate(9 15.8 4)"/>
<rect x="1.2" y="3.2" width="3.9" height="7.5" rx="1.8" transform="rotate(-42 3.1 7)"/>
<rect x="19.3" y="3.2" width="3.9" height="7.5" rx="1.8" transform="rotate(42 21.3 7)"/>
<path d="M.3 12.6 Q-.2 11.6 .8 10.6 L5 6 H19.4 L23.6 10.6 Q24.6 11.6 24 12.6 L16 21.6 Q15 22.8 13.6 22.8 H10.8 Q9.4 22.8 8.4 21.6 Z"/></g>
<circle cx="12.3" cy="12.8" r="5.5" fill="none" stroke="#f4f3ee" stroke-width="1.3"/>
<circle cx="12.3" cy="12.8" r="3.5" fill="#8a2a05"/><circle cx="12.3" cy="12.7" r="1.9" fill="#611400"/></svg>
<span style="left:40.90px;top:13.25px;font-size:19.5px;color:#98a1ac;letter-spacing:-1.070px;">Batch convert</span>
<div style="left:1331px;top:22px;width:15px;height:1px;background:#e6e6e6;"></div>
<div style="left:1400px;top:15px;width:15px;height:15px;border:1px solid #7a7a7a;box-sizing:border-box;"></div>
<svg style="left:1471px;top:15px;" width="17" height="17" viewBox="0 0 17 17"><path d="M.5 .5 L15 15 M15 .5 L.5 15" stroke="#7a7a7a" stroke-width="1.1" fill="none"/></svg>
<span style="left:17.50px;top:66.00px;font-size:17px;letter-spacing:-0.770px;">Presets:</span>
<svg style="left:90px;top:62px;" width="24" height="21" viewBox="0 0 24 21"><g transform="translate(0.50 0.50)"><defs><linearGradient id="fg" x1="0" y1="0" x2="0" y2="1"><stop offset="0" stop-color="#fde6ae"/><stop offset=".5" stop-color="#f9cf85"/><stop offset="1" stop-color="#efa24a"/></linearGradient></defs>
<path d="M1 4 Q1 1 3.5 1 H7.5 Q9 1 10 2.6 H18.5 Q19.8 2.6 19.8 4 V8 H1 Z" fill="#f6c676" stroke="#c9781f" stroke-width="1"/>
<rect x="1" y="5.3" width="21" height="13.2" rx="1.8" fill="url(#fg)" stroke="#c9781f" stroke-width="1"/>
<path d="M11.6 7.5 H16 V11.8 H19 L13.8 17.6 L8.6 11.8 H11.6 Z" fill="#84c81c" stroke="#5a9c14" stroke-width=".6"/></g></svg>
<div style="left:129px;top:58px;width:183px;height:29px;background:#e1e1e1;border:1px solid #adadad;box-sizing:border-box;"></div>
<svg style="left:292px;top:68px;" width="13" height="9" viewBox="0 0 13 9"><g transform="translate(0.40 0.80)"><path d="M0.6 1 L5.8 6.2 L11 1" fill="none" stroke="#333" stroke-width="1.15"/></g></svg>
<svg style="left:326px;top:62px;" width="21" height="21" viewBox="0 0 21 21"><g transform="translate(0.60 0.60)"><path d="M1.2 .6 H16.6 L18.6 2.6 V18.4 H.6 V1.2 Q.6 .6 1.2 .6Z" fill="#9ea2e3" stroke="#456fa6" stroke-width="1"/>
<rect x="4.6" y=".8" width="9.8" height="5.8" fill="#e9e9e9"/><rect x="10.6" y="1.6" width="2.2" height="4" fill="#3e6698"/>
<path d="M4.6 .8 L8.5 6.6 H4.6Z" fill="#c9c9c9"/>
<rect x="3.2" y="9.4" width="12.8" height="9" fill="#f5f5f5"/><rect x="1" y="7.6" width="17" height="1.2" fill="#7f9ad0" opacity=".8"/></g></svg>
<svg style="left:371px;top:63px;" width="21" height="21" viewBox="0 0 21 21"><g transform="translate(0.60 0.00)"><defs><linearGradient id="gx" x1="0" y1="0" x2="0" y2="1"><stop offset="0" stop-color="#cfd1cf"/><stop offset="1" stop-color="#9b9e9b"/></linearGradient></defs>
<path d="M4.4 .5 L9.6 5.7 L14.8 .5 L18.7 4.4 L13.5 9.6 L18.7 14.8 L14.8 18.7 L9.6 13.5 L4.4 18.7 L.5 14.8 L5.7 9.6 L.5 4.4 Z" fill="url(#gx)" stroke="#8d908d" stroke-width=".8"/></g></svg>
<svg style="left:1446px;top:59px;" width="37" height="37" viewBox="0 0 37 37"><g transform="translate(0.00 0.40)"><defs><linearGradient id="gg" x1="0" y1="0" x2="1" y2="1"><stop offset="0" stop-color="#c9d2f6"/><stop offset=".3" stop-color="#f4f6fd"/><stop offset=".55" stop-color="#bfc8f2"/><stop offset="1" stop-color="#a9ace2"/></linearGradient>
<linearGradient id="gg2" x1="0" y1="0" x2="0" y2="1"><stop offset="0" stop-color="#869fd0"/><stop offset=".6" stop-color="#aaa9e2"/><stop offset="1" stop-color="#c3ccf4"/></linearGradient></defs>
<path d="M18.76 4.82 L20.90 0.84 L24.07 1.69 L23.93 6.21 L25.25 6.97 L29.09 4.59 L31.41 6.91 L29.03 10.75 L29.79 12.07 L34.31 11.93 L35.16 15.10 L31.18 17.24 L31.18 18.76 L35.16 20.90 L34.31 24.07 L29.79 23.93 L29.03 25.25 L31.41 29.09 L29.09 31.41 L25.25 29.03 L23.93 29.79 L24.07 34.31 L20.90 35.16 L18.76 31.18 L17.24 31.18 L15.10 35.16 L11.93 34.31 L12.07 29.79 L10.75 29.03 L6.91 31.41 L4.59 29.09 L6.97 25.25 L6.21 23.93 L1.69 24.07 L0.84 20.90 L4.82 18.76 L4.82 17.24 L0.84 15.10 L1.69 11.93 L6.21 12.07 L6.97 10.75 L4.59 6.91 L6.91 4.59 L10.75 6.97 L12.07 6.21 L11.93 1.69 L15.10 0.84 L17.24 4.82Z" fill="#b1b4e6" stroke="#5c83aa" stroke-width="1" stroke-linejoin="round"/>
<circle cx="18" cy="18" r="12.6" fill="url(#gg)"/>
<circle cx="18" cy="18" r="8.8" fill="url(#gg2)" stroke="#6f8fbd" stroke-width=".8"/>
<circle cx="18" cy="18" r="3.9" fill="#eef0f2" stroke="#6f8fbd" stroke-width=".8"/></g></svg>
<div style="left:15px;top:109px;width:179px;height:807px;background:#fff;"></div>
<div style="left:16px;top:110px;width:177px;height:1px;background:#eff0f2;"></div>
<div style="left:16px;top:110px;width:1px;height:805px;background:#eff0f2;"></div>
<div style="left:16px;top:914px;width:177px;height:1px;background:#eff0f2;"></div>
<div style="left:193px;top:109px;width:1px;height:807px;background:#7b7d80;"></div>
<span style="left:33.60px;top:121.25px;font-size:18.5px;font-weight:bold;letter-spacing:-0.388px">Input<span style="position:static;font-weight:normal">: 12 file(s)</span></span>
<span style="left:30.40px;top:163.25px;font-size:18.5px;font-weight:bold;letter-spacing:-0.483px">Actions<span style="position:static;font-weight:normal">: 4/5</span></span>
<span style="left:31.60px;top:205.25px;font-size:18.5px;font-weight:bold;letter-spacing:-0.056px">Output</span>
<span style="left:31.30px;top:247.25px;font-size:18.5px;font-weight:bold;letter-spacing:-0.842px">Status</span>
<span style="left:216.40px;top:112.50px;font-size:24px;font-weight:bold;letter-spacing:-0.466px;">Settings</span>
<div style="left:14px;top:934px;width:200px;height:34px;background:#e1e1e1;border:1px solid #adadad;box-sizing:border-box;"></div>
<svg style="left:21px;top:939px;" width="22" height="25" viewBox="0 0 22 25"><defs><linearGradient id="ep" x1="0" y1="0" x2="0" y2="1"><stop offset="0" stop-color="#f4f4f6"/><stop offset="1" stop-color="#e4e4e6"/></linearGradient></defs>
<rect x=".6" y="1.6" width="17.4" height="21" rx="1.6" fill="url(#ep)" stroke="#a9afe4" stroke-width="1.1"/>
<path d="M1.2 21.2 Q1.2 22.6 2.6 22.6 H16 Q17.6 22.6 17.6 21.2" fill="none" stroke="#5d7186" stroke-width="1.1"/>
<path d="M10 .2 H20.2 V9.4 L17 7.6 L11.6 12 L7.8 7.8 L12.2 3.6Z" fill="#97d200"/>
<path d="M20.2 9.4 L17 7.6 L11.6 12 L10.6 10.8 L17 6 L20.2 7.6Z" fill="#4f9a2a" opacity=".8"/></svg>
<span style="left:46.00px;top:944.00px;font-size:17px;letter-spacing:-0.266px;">Export for NConvert...</span>
<div style="left:1263px;top:932px;width:111px;height:34px;background:#e1e1e1;border:1px solid #adadad;box-sizing:border-box;"></div>
<svg style="left:1274px;top:937px;" width="26" height="22" viewBox="0 0 26 22"><g transform="translate(0.00 0.60)"><rect x=".6" y=".6" width="18.6" height="16.6" rx="1.2" fill="#fff" stroke="#6a8bb8" stroke-width="1"/>
<rect x="2.4" y="2.4" width="15" height="12" fill="#b9bef0"/>
<rect x="5.8" y="4.6" width="18.4" height="15.2" rx="1.2" fill="#fff" stroke="#5f7f9f" stroke-width="1"/>
<rect x="7.6" y="6.4" width="14.8" height="11.6" fill="#f5ba0c"/>
<path d="M7.6 18 L15 9.5 L18 12.2 L22.4 10.6 V18Z" fill="#a8540e"/><path d="M12 13 L15 9.5 L18 12.2 L20 11.5 L16 14.5Z" fill="#eaa968"/>
<path d="M5.8 19.6 H24.2" stroke="#333" stroke-width="1.2"/>
<path d="M2.4 9.4 Q2.4 6.4 5.4 6.4 H8.8 V4.4 L14.4 10.6 L8.8 16.8 V14.6 H6 Q2.4 14.6 2.4 11.2Z" fill="#8fd000" stroke="#5a9c14" stroke-width=".5"/></g></svg>
<span style="left:1301.50px;top:942.00px;font-size:17px;letter-spacing:-0.567px;">Convert</span>
<div style="left:1385px;top:932px;width:110px;height:33px;background:#e1e1e1;border:1px solid #adadad;box-sizing:border-box;"></div>
<span style="left:1420.20px;top:941.00px;font-size:17px;letter-spacing:-1.180px;">Close</span>
<div style="left:217px;top:156px;width:431px;height:186px;border:1px solid #dcdcdc;box-sizing:border-box;"></div>
<span style="left:234.20px;top:190.00px;font-size:17px;letter-spacing:-0.390px;">Preview background color</span>
<div style="left:432px;top:180px;width:40px;height:34px;background:#e1e1e1;border:1px solid #adadad;box-sizing:border-box;"></div>
<div style="left:440px;top:185px;width:24px;height:24px;background:#999999;border:1px solid #bdbdbd;box-sizing:border-box;"></div>
<div style="left:234px;top:227px;width:20px;height:20px;background:#fff;border:1px solid #333;box-sizing:border-box;"></div>
<svg style="left:234px;top:227px;" width="21" height="21" viewBox="0 0 21 21"><path d="M3.2 10.2 L7.8 14.8 L16.6 5.4" fill="none" stroke="#333" stroke-width="1.7"/></svg>
<span style="left:264.20px;top:230.00px;font-size:17px;letter-spacing:-0.254px;">Save actions list at exiting</span>
<div style="left:234px;top:263px;width:20px;height:20px;background:#fff;border:1px solid #333;box-sizing:border-box;"></div>
<span style="left:264.20px;top:266.00px;font-size:17px;letter-spacing:-0.206px;">Clear filename field at startup</span>
<div style="left:234px;top:299px;width:20px;height:20px;background:#fff;border:1px solid #333;box-sizing:border-box;"></div>
<span style="left:264.20px;top:302.00px;font-size:17px;letter-spacing:-0.666px;">Use multiple CPU Cores</span>
<div style="left:479px;top:305px;width:112px;height:6px;background:#e7e7e7;border:1px solid #d6d6d6;box-sizing:border-box;"></div>
<div style="left:465px;top:298px;width:15px;height:21px;background:#cccccc;"></div>
<span style="left:601.00px;top:302.00px;font-size:17px;">1</span>
<div style="left:219px;top:371px;width:430px;height:257px;border:1px solid #dcdcdc;box-sizing:border-box;"></div>
<div style="left:230px;top:369px;width:126.60000000000002px;height:5px;background:#eff0f2;"></div>
<span style="left:234.00px;top:364.00px;font-size:17px;letter-spacing:-0.354px;">After conversion</span>
<div style="left:237px;top:402px;width:19px;height:19px;background:#fff;border:1px solid #333;box-sizing:border-box;"></div>
<span style="left:266.60px;top:405.00px;font-size:17px;letter-spacing:-0.302px;">Open file explorer</span>
<div style="left:237px;top:438px;width:19px;height:19px;background:#fff;border:1px solid #333;box-sizing:border-box;"></div>
<span style="left:266.60px;top:441.00px;font-size:17px;letter-spacing:-0.461px;">Open in Browser</span>
<div style="left:237px;top:474px;width:19px;height:19px;background:#fff;border:1px solid #333;box-sizing:border-box;"></div>
<span style="left:266.60px;top:477.00px;font-size:17px;letter-spacing:-0.043px;">Clear the 'Input' file(s)</span>
<div style="left:237px;top:512px;width:19px;height:19px;background:#fff;border:1px solid #333;box-sizing:border-box;"></div>
<span style="left:266.60px;top:515.00px;font-size:17px;letter-spacing:-0.266px;">Delete original</span>
<div style="left:237px;top:552px;width:19px;height:19px;background:#fff;border:1px solid #333;box-sizing:border-box;"></div>
<span style="left:266.60px;top:555.00px;font-size:17px;letter-spacing:-0.281px;">Exit after conversion</span>
<div style="left:237px;top:589px;width:19px;height:19px;background:#fff;border:1px solid #333;box-sizing:border-box;"></div>
<svg style="left:237px;top:589px;" width="20" height="20" viewBox="0 0 20 20"><path d="M3.0 9.7 L7.4 14.1 L15.8 5.1" fill="none" stroke="#333" stroke-width="1.7"/></svg>
<span style="left:266.60px;top:592.00px;font-size:17px;letter-spacing:-0.282px;">Beep at the end of process</span>
<div style="left:235px;top:859px;width:203px;height:33px;background:#e1e1e1;border:1px solid #adadad;box-sizing:border-box;"></div>
<span style="left:246.50px;top:869.00px;font-size:17px;letter-spacing:0.094px;">Open format settings...</span></div>
</body></html>
